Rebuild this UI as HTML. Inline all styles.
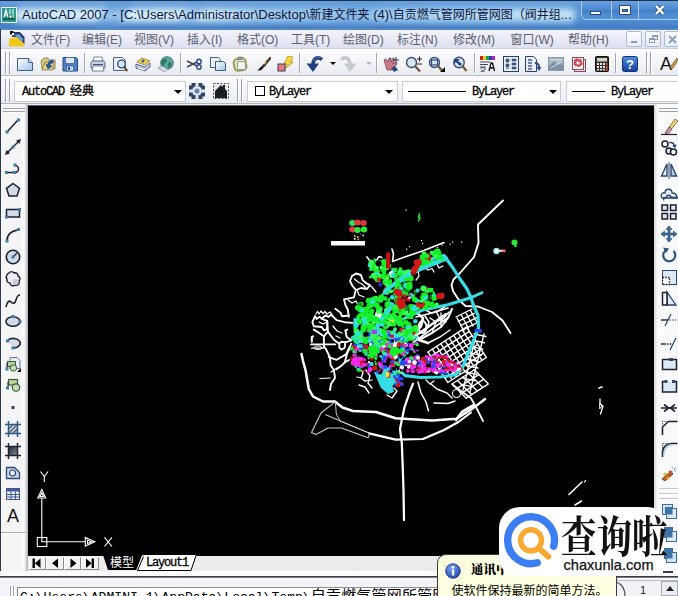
<!DOCTYPE html>
<html><head><meta charset="utf-8">
<style>
*{margin:0;padding:0;box-sizing:border-box}
html,body{width:678px;height:596px;overflow:hidden;background:#eceff6}
body{position:relative;font-family:"Liberation Sans","Noto Sans CJK SC",sans-serif;font-size:12px;color:#000}
.a{position:absolute}
#title{left:0;top:0;width:678px;height:30px;background:linear-gradient(180deg,#1d2c44 0,#1d2c44 1px,#65a0de 1px,#5693d6 8px,#4e8bd1 20px,#4a85cc 25px,#4179c2 28px,#5a8ccc 29px)}
#glow{left:14px;top:8px;width:562px;height:14px;border-radius:7px;background:linear-gradient(90deg,rgba(224,245,250,.95) 0,rgba(226,246,250,.95) 190px,rgba(188,224,244,.8) 250px,rgba(180,218,242,.78) 330px,rgba(196,230,246,.85) 430px,rgba(206,236,248,.92) 560px);filter:blur(3.5px)}
#streak{left:0;top:1px;width:578px;height:28px;background:linear-gradient(118deg,transparent 0,transparent 92px,rgba(86,146,216,.5) 100px,rgba(86,146,216,.5) 112px,transparent 122px,transparent 165px,rgba(86,146,216,.3) 172px,rgba(86,146,216,.3) 180px,transparent 188px,transparent 300px,rgba(86,146,216,.25) 310px,rgba(86,146,216,.25) 330px,transparent 345px)}
#titletxt{left:22px;top:6px;height:18px;line-height:18px;font-size:13px;color:#0b1440;white-space:nowrap}
#titletxt span{font-size:12px}
#menubar{left:1px;top:30px;width:677px;height:19px;background:linear-gradient(#f3f3fb,#e9eaf6 55%,#dde0ef);border-bottom:1px solid #cdd0e0}
.mi{top:32.5px;height:15px;line-height:15px;font-size:12px;color:#5a5e70;white-space:nowrap}
#tb1{left:1px;top:49px;width:677px;height:27px;background:linear-gradient(#fdfdfe,#f4f5f9 50%,#e8ebf2);border-bottom:1px solid #b9bdc8}
#tb2{left:1px;top:76px;width:677px;height:28px;background:linear-gradient(#fdfdfe,#f4f5f9 50%,#e8ebf2);border-top:1px solid #fff;border-bottom:1px solid #b4b7be}
#canvas{left:28px;top:105px;width:626px;height:451px;background:#000;border-top:1px solid #5a5d64}
#left{left:1px;top:104px;width:27px;height:474px;background:linear-gradient(90deg,#f6f6f7 0,#f4f4f6 20px,#fcfcfd 23px,#d8dae0 25px,#a8abb2 27px)}
#right{left:654px;top:104px;width:24px;height:474px;background:linear-gradient(90deg,#d9dbe0 0,#ececf0 2px,#fcfcfd 4px,#f7f8fa 24px)}
#ledge{left:0;top:29px;width:1px;height:567px;background:#2a3a50}
.combo{background:#fff;border:1px solid #c9cdd8;height:21px;top:81px}
.mono{font-family:"Liberation Mono","Noto Sans CJK SC",monospace;font-size:12px;letter-spacing:-1.2px;color:#000;white-space:nowrap;line-height:14px;-webkit-text-stroke:.3px #000}
.mono b{font-weight:normal;letter-spacing:0;font-size:12px}
.grip{width:2px;border-left:1px solid #9da1ab;border-right:1px solid #fff}
.sep{width:2px;border-left:1px solid #a4a8b2;border-right:1px solid #fff}
.dd{width:0;height:0;border-left:4px solid transparent;border-right:4px solid transparent;border-top:4.5px solid #000}
</style></head><body>
<div id="title" class="a"></div>
<div id="glow" class="a"></div>
<div id="streak" class="a"></div>
<div id="titletxt" class="a">AutoCAD 2007 - [C:\Users\Administrator\Desktop\<span>新建文件夹</span> (4)\<span>自贡燃气管网所管网图（阀井组</span>...</div>
<div id="menubar" class="a"></div>

<div class="a mi" style="left:31px">文件(F)</div>
<div class="a mi" style="left:82px">编辑(E)</div>
<div class="a mi" style="left:134px">视图(V)</div>
<div class="a mi" style="left:187px">插入(I)</div>
<div class="a mi" style="left:237px">格式(O)</div>
<div class="a mi" style="left:291px">工具(T)</div>
<div class="a mi" style="left:343px">绘图(D)</div>
<div class="a mi" style="left:397px">标注(N)</div>
<div class="a mi" style="left:453px">修改(M)</div>
<div class="a mi" style="left:510.5px">窗口(W)</div>
<div class="a mi" style="left:568px">帮助(H)</div>
<div id="tb1" class="a"></div>
<div id="tb2" class="a"></div>
<div id="left" class="a"></div>
<div id="right" class="a"></div>
<div id="ledge" class="a"></div>
<div id="canvas" class="a"></div>

<div class="a grip" style="left:5px;top:52px;height:22px"></div>
<div class="a grip" style="left:5px;top:79px;height:23px"></div>
<div class="a grip" style="left:9px;top:52px;height:22px"></div>
<div class="a grip" style="left:9px;top:79px;height:23px"></div>
<div class="a sep" style="left:84px;top:53px;height:20px"></div>
<div class="a sep" style="left:180px;top:53px;height:20px"></div>
<div class="a sep" style="left:299px;top:53px;height:20px"></div>
<div class="a sep" style="left:376px;top:53px;height:20px"></div>
<div class="a sep" style="left:474px;top:53px;height:20px"></div>
<div class="a sep" style="left:615px;top:53px;height:20px"></div>
<div class="a grip" style="left:646px;top:52px;height:22px"></div>
<div class="a grip" style="left:650px;top:52px;height:22px"></div>
<div class="a combo" style="left:14px;width:172px"></div>
<div class="a mono" style="left:22px;top:85px">AutoCAD <b>经典</b></div>
<div class="a dd" style="left:174px;top:90px"></div>
<div class="a grip" style="left:237px;top:79px;height:23px"></div>
<div class="a grip" style="left:241px;top:79px;height:23px"></div>
<div class="a combo" style="left:247px;width:151px"></div>
<div class="a" style="left:255px;top:86px;width:10px;height:10px;border:1px solid #000;background:#fff"></div>
<div class="a mono" style="left:269px;top:85px">ByLayer</div>
<div class="a dd" style="left:385px;top:90px"></div>
<div class="a combo" style="left:402px;width:159px"></div>
<div class="a" style="left:408px;top:91px;width:58px;height:1px;background:#000"></div>
<div class="a mono" style="left:472px;top:85px">ByLayer</div>
<div class="a dd" style="left:549px;top:90px"></div>
<div class="a combo" style="left:566px;width:112px;border-right:none"></div>
<div class="a" style="left:572px;top:91px;width:33px;height:1px;background:#000"></div>
<div class="a mono" style="left:611px;top:85px">ByLayer</div>
<svg class="a" style="left:17px;top:56px" width="16" height="16" viewBox="0 0 16 16"><defs><linearGradient id="gp" x1="0" y1="0" x2="1" y2="1"><stop offset="0" stop-color="#fff"/><stop offset="1" stop-color="#9fc4e4"/></linearGradient></defs><path d="M0.5 2.5h11l4 4v8h-15z" fill="url(#gp)" stroke="#3f5f93"/><path d="M11.5 2.5v4h4" fill="#dbeaf6" stroke="#3f5f93"/></svg>
<svg class="a" style="left:40px;top:56px" width="16" height="16" viewBox="0 0 16 16"><path d="M1 5l3-3h4l1 2h6v9h-13z" fill="#d8c682" stroke="#8a7a40" stroke-width=".8"/><path d="M2 14l3-8h10l-3 8z" fill="#e6d28a" stroke="#8a7a40" stroke-width=".8"/><path d="M13 4c-3 0-5 2-5 5l-2-1 2 5 4-3-2 0c0-2 1-3 3-3z" fill="#2a5aa8" stroke="#1a3a78" stroke-width=".6"/></svg>
<svg class="a" style="left:62px;top:56px" width="16" height="16" viewBox="0 0 16 16"><path d="M1 1.5h13l1.500 1.5v12h-14.5z" fill="#4f7fc4" stroke="#264a86"/><rect x="3.500" y="1.500" width="9" height="6" fill="#dce8f6" stroke="#264a86" stroke-width=".6"/><rect x="4.500" y="10" width="7" height="5" fill="#c8d8ee" stroke="#264a86" stroke-width=".6"/><rect x="6" y="11" width="2" height="3" fill="#264a86"/></svg>
<svg class="a" style="left:90px;top:56px" width="16" height="16" viewBox="0 0 16 16"><path d="M4 1h8l1 5h-10z" fill="#fff" stroke="#56688c" stroke-width=".8"/><path d="M1 7c0-1 1-2 2-2h10c1 0 2 1 2 2v4c0 1-1 2-2 2h-10c-1 0-2-1-2-2z" fill="#c9d3e6" stroke="#3f4f78" stroke-width=".9"/><path d="M3 10h10l1 5h-12z" fill="#fff" stroke="#56688c" stroke-width=".8"/><path d="M3 8.500h10" stroke="#3f4f78"/></svg>
<svg class="a" style="left:112px;top:56px" width="16" height="16" viewBox="0 0 16 16"><path d="M1.500 1.500h9l3 3v10h-12z" fill="#e6eef8" stroke="#51658f"/><circle cx="9.500" cy="8" r="3.800" fill="#cfe4f4" stroke="#3c4c70" stroke-width="1.300"/><path d="M12 11l3.500 4" stroke="#6a4a2a" stroke-width="2"/></svg>
<svg class="a" style="left:135px;top:56px" width="16" height="16" viewBox="0 0 16 16"><path d="M2 6l5-4 8 3-5 4z" fill="#f2d24a" stroke="#8a6a1a" stroke-width=".7"/><path d="M1 8l9 3 5-4v4l-5 4-9-3z" fill="#b9c8e2" stroke="#3f4f78" stroke-width=".8"/><circle cx="8" cy="5" r="1.500" fill="#2a5aa8"/><path d="M3 12l6 2" stroke="#fff"/></svg>
<svg class="a" style="left:158px;top:56px" width="16" height="16" viewBox="0 0 16 16"><circle cx="9" cy="7" r="6.300" fill="#5aa6a0" stroke="#2a5a6a" stroke-width=".8"/><path d="M5 3c2-1 4 0 4 2s-3 2-3 4-3 0-3-2 1-3 2-4z" fill="#2f7a5a"/><path d="M11 6c2 0 3 2 2 4s-3 2-3 0 0-3 1-4z" fill="#2f7a5a"/><path d="M0 12l4-2 6 3-4 3z" fill="#d6dce8" stroke="#7a86a0" stroke-width=".7"/></svg>
<svg class="a" style="left:186px;top:56px" width="16" height="16" viewBox="0 0 16 16"><path d="M1 5l10 5M1 11l10-5" stroke="#3a3f52" stroke-width="1.400"/><circle cx="13" cy="5.500" r="2.200" fill="none" stroke="#2a4a8a" stroke-width="1.400"/><circle cx="13" cy="11" r="2.200" fill="none" stroke="#2a4a8a" stroke-width="1.400"/></svg>
<svg class="a" style="left:210px;top:56px" width="16" height="16" viewBox="0 0 16 16"><path d="M0.500 1.500h8l2 2v8h-10z" fill="#e8f0fa" stroke="#3f5f93"/><path d="M5.500 5.500h8l2 2v7h-10z" fill="url(#gp)" stroke="#3f5f93"/></svg>
<svg class="a" style="left:232px;top:56px" width="16" height="16" viewBox="0 0 16 16"><rect x="2" y="2.500" width="12" height="12" rx="3.500" fill="#e9e6c8" stroke="#a89a56" stroke-width="2" transform="rotate(-10 8 8)"/><path d="M5.500 5.500h6l2 2v6h-8z" fill="#eef4ee" stroke="#7f9a8a" stroke-width=".9"/><rect x="6" y="1" width="4" height="2.500" fill="#9aa0a8" stroke="#666" stroke-width=".6"/></svg>
<svg class="a" style="left:255px;top:56px" width="16" height="16" viewBox="0 0 16 16"><path d="M15 1l-7 8 1.500 1.500 6.500-8z" fill="#5a3a2a" stroke="#2a1a10" stroke-width=".6"/><path d="M8 9l1.500 1.500-3 3.500-4 1 2-3z" fill="#222"/><path d="M9 8l2-2" stroke="#e8c84a" stroke-width="1.500"/></svg>
<svg class="a" style="left:277px;top:56px" width="16" height="16" viewBox="0 0 16 16"><path d="M11 0l6 1-4 5 3 0-8 7 2-5-3 0z" fill="#f6d83a" stroke="#a8861a" stroke-width=".7"/><rect x="1" y="8" width="7" height="7" fill="#e87a7a" stroke="#3a3a5a" stroke-width="1"/></svg>
<svg class="a" style="left:305px;top:56px" width="18" height="16" viewBox="0 0 18 16"><path d="M17 3.500C13 .5 8.500 1.500 8 8.500" fill="none" stroke="#1f3f7f" stroke-width="3.600"/><path d="M1.500 7.500h12.500l-6 8.500z" fill="#1f3f7f"/><path d="M16.500 2.500C13 .5 9.500 1.200 8.200 5" fill="none" stroke="#4a78c0" stroke-width="1"/></svg>
<div class="a dd" style="left:330px;top:62px;border-left-width:3px;border-right-width:3px;border-top-width:3.500px"></div>
<svg class="a" style="left:340px;top:56px" width="18" height="16" viewBox="0 0 18 16"><path d="M1 3.500C5 .5 9.500 1.500 10 8.500" fill="none" stroke="#c6c9cf" stroke-width="3.600"/><path d="M4 7.500h12.500l-6.500 8.500z" fill="#c6c9cf"/></svg>
<div class="a dd" style="left:366px;top:62px;border-left-width:3px;border-right-width:3px;border-top-width:3.500px;border-top-color:#b4b7be"></div>
<svg class="a" style="left:382px;top:56px" width="18" height="16" viewBox="0 0 18 16"><path d="M2 4l2-1 2 3 1-4 2 0 0 4 2-4 2 1-2 5 3-2 1 2-5 6h-5z" fill="#c97a86" stroke="#6a3a4a" stroke-width=".7"/><path d="M9 12l4-2 3 4-4 2z" fill="#2a4a7a"/><path d="M14 1v6M11 4h6" stroke="#2a3a5a" stroke-width="1"/></svg>
<svg class="a" style="left:405px;top:56px" width="18" height="16" viewBox="0 0 18 16"><circle cx="6.500" cy="6.500" r="5" fill="#d4e8f6" stroke="#3c4c70" stroke-width="1.400"/><path d="M10 10l5 5.500" stroke="#7a5230" stroke-width="2.200"/><path d="M12 3h5M14.500 .5v5M12 8h5" stroke="#222" stroke-width="1"/></svg>
<svg class="a" style="left:428px;top:56px" width="18" height="16" viewBox="0 0 18 16"><circle cx="6.500" cy="6.500" r="5" fill="#d4e8f6" stroke="#3c4c70" stroke-width="1.400"/><rect x="3.500" y="4" width="6" height="5" fill="none" stroke="#2a4a8a" stroke-width="1.200"/><path d="M10 10l4 4.500" stroke="#7a5230" stroke-width="2.200"/><path d="M17 11v5h-5z" fill="#000"/></svg>
<svg class="a" style="left:451px;top:56px" width="18" height="16" viewBox="0 0 18 16"><circle cx="8" cy="6.500" r="5.200" fill="#d4e8f6" stroke="#3c4c70" stroke-width="1.400"/><path d="M3 3l6 0-2 2 4 3-2 2-4-4-2 2z" fill="#27408b"/><path d="M11.500 10l4 5" stroke="#7a5230" stroke-width="2.200"/></svg>
<svg class="a" style="left:479px;top:56px" width="16" height="16" viewBox="0 0 16 16"><rect x="1" y="0" width="3" height="4" fill="#d02020"/><rect x="4" y="0" width="3" height="4" fill="#e8d020"/><rect x="7" y="0" width="3" height="4" fill="#20a040"/><rect x="10" y="0" width="3" height="4" fill="#2040c0"/><rect x="13" y="0" width="3" height="4" fill="#c020c0"/><path d="M1 6h10M1 8.500h8M1 11h6" stroke="#445" stroke-width="1.200"/><path d="M10 15l2-8 1.500 0 2 8M11 12h4" stroke="#111" stroke-width="1.300" fill="none"/><path d="M2 13c0-2 4-2 4 0s-4 1-4 3h4" stroke="#345" fill="none"/></svg>
<svg class="a" style="left:503px;top:56px" width="16" height="16" viewBox="0 0 16 16"><rect x=".5" y=".5" width="15" height="15" fill="#e9eff8" stroke="#2d3f66"/><path d="M3 3h3v3h-3zM3 8h3v3h-3zM9 3h4v2h-4zM9 7h4v2h-4zM9 11h4v2h-4zM3 12.500h3" fill="#47608f" stroke="#2d3f66" stroke-width=".6"/></svg>
<svg class="a" style="left:525px;top:56px" width="17" height="16" viewBox="0 0 17 16"><path d="M.5 .5h8l3 3v12h-11z" fill="#e9eff8" stroke="#2d3f66"/><path d="M3 4h4M3 7h4M3 10h4M3 13h4" stroke="#47608f" stroke-width="1.400"/><path d="M10 6c3 0 5 2 5 5l1.500 0-2.500 4-2.500-4 1.500 0c0-2-1-3-3-3z" fill="#2a4a8a"/></svg>
<svg class="a" style="left:548px;top:56px" width="16" height="16" viewBox="0 0 16 16"><rect x=".5" y="1.500" width="15" height="13" fill="#aab8c6" stroke="#8a98a8"/><path d="M1 10l5-5 4 4 3-2 3 3v4h-15z" fill="#7f93a6"/><path d="M2 4l12 0M3 12l10-6" stroke="#d5dde6" stroke-width="1"/></svg>
<svg class="a" style="left:570px;top:56px" width="16" height="16" viewBox="0 0 16 16"><rect x="4.500" y="3.500" width="11" height="12" fill="#f4dede" stroke="#8a4a5a"/><rect x="2.500" y="1.500" width="11" height="12" fill="#fbeeee" stroke="#8a4a5a"/><path d="M5 4c1-2 3-1 3 0 1-1 4-1 3 2 2 1 1 4-1 3 0 2-3 2-3 0-2 1-4-1-2-3-1 0-1-2 0-2z" fill="#e05060" stroke="#a01828" stroke-width=".8"/><circle cx="8" cy="7" r="1.600" fill="#fff"/></svg>
<svg class="a" style="left:594px;top:56px" width="16" height="16" viewBox="0 0 16 16"><rect x="1.500" y=".5" width="13" height="15" rx="1" fill="#3a3230" stroke="#15110f"/><rect x="3" y="2" width="10" height="3.500" fill="#c9d6c2"/><g fill="#e8e2dc"><rect x="3" y="7" width="2" height="2"/><rect x="6" y="7" width="2" height="2"/><rect x="9" y="7" width="2" height="2"/><rect x="3" y="10" width="2" height="2"/><rect x="6" y="10" width="2" height="2"/><rect x="9" y="10" width="2" height="2"/><rect x="3" y="13" width="2" height="1.500"/><rect x="6" y="13" width="2" height="1.500"/><rect x="9" y="13" width="2" height="1.500"/></g><g fill="#d05040"><rect x="12" y="7" width="1.500" height="2"/><rect x="12" y="10" width="1.500" height="4.500"/></g></svg>
<svg class="a" style="left:622px;top:56px" width="16" height="16" viewBox="0 0 16 16"><defs><linearGradient id="gh" x1="0" y1="0" x2="0" y2="1"><stop offset="0" stop-color="#4f8fe0"/><stop offset="1" stop-color="#163f9a"/></linearGradient></defs><rect x=".5" y=".5" width="15" height="15" rx="2" fill="url(#gh)" stroke="#0f2f78"/><text x="8" y="13" font-family="Liberation Sans,sans-serif" font-weight="bold" font-size="13" fill="#fff" text-anchor="middle">?</text></svg>
<svg class="a" style="left:660px;top:55px" width="18" height="18" viewBox="0 0 18 18"><text x="0" y="15" font-family="Liberation Sans,sans-serif" font-size="18" fill="#111">A</text><path d="M17 3l-6 8-1 3 3-1 5-8z" fill="#c89a3a" stroke="#5a3a1a" stroke-width=".6"/></svg>
<svg class="a" style="left:189px;top:83px" width="16" height="16" viewBox="0 0 16 16"><rect x="0" y="0" width="16" height="16" fill="#2f4468"/><g fill="#dfe6f2"><circle cx="8" cy="8" r="5"/></g><circle cx="8" cy="8" r="2.500" fill="#6d82a8"/><g fill="#dfe6f2"><rect x="6.500" y="0" width="3" height="3"/><rect x="6.500" y="13" width="3" height="3"/><rect x="0" y="6.500" width="3" height="3"/><rect x="13" y="6.500" width="3" height="3"/></g><g fill="#eef2f8"><rect x="0" y="0" width="2.500" height="2.500"/><rect x="13.500" y="0" width="2.500" height="2.500"/><rect x="0" y="13.500" width="2.500" height="2.500"/><rect x="13.500" y="13.500" width="2.500" height="2.500"/></g></svg>
<svg class="a" style="left:213px;top:83px" width="16" height="16" viewBox="0 0 16 16"><rect x=".5" y=".5" width="15" height="15" fill="#e6e9ef" stroke="#555" stroke-dasharray="2 1.500"/><path d="M2 8l6-6 6 6v7h-12z" fill="#1a1d24"/><rect x="10" y="2" width="2" height="4" fill="#1a1d24"/></svg>
<div class="a" style="left:626px;top:31px;width:16px;height:16px;border:1px solid #a9bcd8;border-radius:2px;background:linear-gradient(#fdfdff,#e9edf6)"></div>
<div class="a" style="left:631px;top:41px;width:6px;height:2px;background:#8a9cbc"></div>
<div class="a" style="left:645px;top:31px;width:16px;height:16px;border:1px solid #a9bcd8;border-radius:2px;background:linear-gradient(#fdfdff,#e9edf6)"></div>
<div class="a" style="left:652px;top:35px;width:6px;height:5px;border:1px solid #8a9cbc;border-top-width:2px"></div>
<div class="a" style="left:649px;top:38px;width:6px;height:5px;border:1px solid #8a9cbc;border-top-width:2px;background:#f4f6fb"></div>
<div class="a" style="left:663.500px;top:31px;width:17px;height:16px;border:1px solid #a9bcd8;border-radius:2px;background:linear-gradient(#fdfdff,#e9edf6)"></div>
<svg class="a" style="left:668px;top:35px" width="10" height="9"><path d="M1 1l7 7M8 1l-7 7" stroke="#8a9cbc" stroke-width="1.800"/></svg>
<svg class="a" style="left:9px;top:31px" width="16" height="16" viewBox="0 0 16 16"><path d="M0 7.500l8-1.500 7.500 7v2.500h-15.500z" fill="#f2c81a"/><path d="M3 1h8l4.500 5v7l-7.500-7h-5z" fill="#1f3a6e"/><path d="M5.500 4l4.500-1 4.500 5.500-1.200 2z" fill="#6fa0d0"/><path d="M1 0h3.500v3.500h-3.500z" fill="#111"/><path d="M3 2h2.200v2.200h-2.200z" fill="#fff"/></svg>
<svg class="a" style="left:1px;top:7px" width="16" height="16" viewBox="0 0 16 16"><rect x="0" y="0" width="16" height="16" fill="#e6f6f2"/><rect x="1" y="1" width="14" height="14" fill="#2b9a8a"/><path d="M3 10l2-7 2 7M3.500 8h3" stroke="#fff" stroke-width="1.200" fill="none"/><path d="M9 2v9M12 2v9" stroke="#bfe8e0" stroke-width="1.400"/><path d="M2 12h12" stroke="#0c4a44" stroke-width="1.400"/><rect x="8" y="8" width="3" height="3" fill="#fff" stroke="#0c4a44" stroke-width=".7"/></svg>
<div class="a" style="left:581px;top:1px;width:97px;height:19px;border-radius:0 0 0 5px;background:linear-gradient(#6aa2e0,#4f8bd2 45%,#4380ca 50%,#5793d8);border:1px solid #a9cdf0;border-top:none;border-right:none"></div>
<div class="a" style="left:611px;top:1px;width:1px;height:19px;background:#a9cdf0"></div>
<div class="a" style="left:638px;top:1px;width:1px;height:19px;background:#a9cdf0"></div>
<div class="a" style="left:590px;top:11px;width:11px;height:4px;background:#fff;border:1px solid #2a4a7a"></div>
<div class="a" style="left:619px;top:5px;width:12px;height:10px;background:#fff;border:1px solid #2a4a7a"></div>
<div class="a" style="left:622px;top:9px;width:6px;height:3px;background:#4a82cc;border:1px solid #2a4a7a"></div>
<svg class="a" style="left:653px;top:4px" width="14" height="12"><path d="M3 2l7.500 8M10.500 2l-7.500 8" stroke="#2a4a7a" stroke-width="4"/><path d="M3 2l7.500 8M10.500 2l-7.500 8" stroke="#fff" stroke-width="2.500"/></svg>
<div class="a" style="left:3px;top:108px;width:22px;height:1px;background:#9da1ab"></div><div class="a" style="left:3px;top:109px;width:22px;height:1px;background:#fff"></div><div class="a" style="left:3px;top:111px;width:22px;height:1px;background:#9da1ab"></div><div class="a" style="left:3px;top:112px;width:22px;height:1px;background:#fff"></div>
<svg class="a" style="left:4px;top:117px" width="18" height="18" viewBox="0 0 18 18"><path d="M3 15L14 3" stroke="#1d2230" stroke-width="1.500"/><rect x="1.500" y="13.500" width="3" height="3" fill="#3b7ea6"/><rect x="13" y="1.500" width="3" height="3" fill="#3b7ea6"/></svg>
<svg class="a" style="left:4px;top:138px" width="18" height="18" viewBox="0 0 18 18"><path d="M2.500 15.500L15.500 2.500" stroke="#1d2230" stroke-width="1.500"/><path d="M1 17l1.500-5 3.500 3.500zM17 1l-1.500 5-3.500-3.500z" fill="#1d2230"/><rect x="7.500" y="7.500" width="3" height="3" fill="#3b7ea6"/></svg>
<svg class="a" style="left:4px;top:160px" width="18" height="18" viewBox="0 0 18 18"><path d="M3 12.500h8a3.500 3.500 0 0 0 0-7" stroke="#1d2230" stroke-width="1.500" fill="none"/><rect x="1" y="11" width="3" height="3" fill="#3b7ea6"/><rect x="9" y="11" width="3" height="3" fill="#3b7ea6"/><rect x="9.500" y="3.500" width="3" height="3" fill="#3b7ea6"/></svg>
<svg class="a" style="left:4px;top:181px" width="18" height="18" viewBox="0 0 18 18"><path d="M9 2.500l6.500 4.800-2.500 7.700h-8l-2.500-7.700z" fill="#d5daea" stroke="#1d2230" stroke-width="1.500"/></svg>
<svg class="a" style="left:4px;top:203.6px" width="18" height="18" viewBox="0 0 18 18"><rect x="2.500" y="5.500" width="13" height="7.500" fill="#d5daea" stroke="#1d2230" stroke-width="1.500"/><rect x="14" y="4" width="3" height="3" fill="#3b7ea6"/><rect x="1" y="11.500" width="3" height="3" fill="#3b7ea6"/></svg>
<svg class="a" style="left:4px;top:225.5px" width="18" height="18" viewBox="0 0 18 18"><path d="M3 15c0-6 4-10 11-11" stroke="#1d2230" stroke-width="1.700" fill="none"/><rect x="1.500" y="13.500" width="3" height="3" fill="#3b7ea6"/><rect x="13" y="2" width="3" height="3" fill="#3b7ea6"/></svg>
<svg class="a" style="left:4px;top:247.7px" width="18" height="18" viewBox="0 0 18 18"><circle cx="9" cy="9" r="6.700" fill="#d5daea" stroke="#1d2230" stroke-width="1.600"/><path d="M9 9l4-4" stroke="#1d2230" stroke-width="1.300"/><rect x="7.500" y="7.500" width="3" height="3" fill="#3b7ea6"/></svg>
<svg class="a" style="left:4px;top:269.6px" width="18" height="18" viewBox="0 0 18 18"><path d="M5 3a3 3 0 0 1 5 0 3 3 0 0 1 4 3 3 3 0 0 1 1 5 3 3 0 0 1-4 4 3 3 0 0 1-5-2 3 3 0 0 1-3-4 3 3 0 0 1 0-4 3 3 0 0 1 2-2z" fill="#eceef4" stroke="#1d2230" stroke-width="1.400"/><circle cx="11.500" cy="12" r="3" fill="#c5cad8"/></svg>
<svg class="a" style="left:4px;top:291.8px" width="18" height="18" viewBox="0 0 18 18"><path d="M2 15c1-5 3-7 5-5s4 2 5-2 2-5 4-5" stroke="#1d2230" stroke-width="1.600" fill="none"/></svg>
<svg class="a" style="left:4px;top:312.4px" width="18" height="18" viewBox="0 0 18 18"><ellipse cx="9" cy="9.500" rx="7" ry="4.800" fill="#d5daea" stroke="#1d2230" stroke-width="1.600"/><rect x="7.500" y="3" width="3" height="3" fill="#3b7ea6"/><rect x="14.500" y="8" width="3" height="3" fill="#3b7ea6"/></svg>
<svg class="a" style="left:4px;top:333.9px" width="18" height="18" viewBox="0 0 18 18"><path d="M4 6a7 4.800 0 1 1 5 8" fill="#d5daea" stroke="#1d2230" stroke-width="1.600"/><rect x="2" y="5.500" width="3" height="3" fill="#3b7ea6"/><rect x="7.500" y="12.500" width="3" height="3" fill="#3b7ea6"/></svg>
<svg class="a" style="left:4px;top:354.6px" width="18" height="18" viewBox="0 0 18 18"><path d="M6 2.500h7l3 3v8h-10z" fill="#e8eef8" stroke="#6a7a9a" stroke-width="1"/><rect x="3.500" y="6.500" width="8" height="5" fill="#b9d29a" stroke="#3a5a3a" stroke-width="1"/><circle cx="9.500" cy="13" r="3.200" fill="#c9deb0" stroke="#3a5a3a" stroke-width="1"/><path d="M3 8v6" stroke="#1d2230"/><rect x="1.500" y="12.500" width="3" height="3" fill="#3b7ea6"/><path d="M17 13v4h-4z" fill="#111"/></svg>
<svg class="a" style="left:4px;top:376px" width="18" height="18" viewBox="0 0 18 18"><rect x="4.500" y="3.500" width="9" height="5.500" fill="#b9d29a" stroke="#3a5a3a" stroke-width="1.200"/><circle cx="12" cy="11.500" r="3.700" fill="#c9deb0" stroke="#3a5a3a" stroke-width="1.200"/><path d="M4 6v6" stroke="#1d2230"/><rect x="2" y="10.500" width="3" height="3" fill="#3b7ea6"/></svg>
<svg class="a" style="left:4px;top:398.8px" width="18" height="18" viewBox="0 0 18 18"><rect x="7.500" y="7" width="3" height="3" fill="#23466e"/></svg>
<svg class="a" style="left:4px;top:420px" width="18" height="18" viewBox="0 0 18 18"><defs><pattern id="ht" width="3" height="3" patternUnits="userSpaceOnUse" patternTransform="rotate(45)"><rect width="3" height="3" fill="#dfe3ee"/><rect width="1.300" height="3" fill="#3a4256"/></pattern></defs><rect x="4" y="4" width="10" height="10" fill="url(#ht)"/><path d="M1 4.500h16M1 13.500h16M4.500 1v16M13.500 1v16" stroke="#2a5a86" stroke-width="1.500"/></svg>
<svg class="a" style="left:4px;top:441.7px" width="18" height="18" viewBox="0 0 18 18"><defs><linearGradient id="gg" x1="0" y1="0" x2="1" y2="1"><stop offset="0" stop-color="#20242c"/><stop offset="1" stop-color="#8a909c"/></linearGradient></defs><rect x="4" y="4" width="10" height="10" fill="url(#gg)"/><path d="M1 4.500h16M1 13.500h16M4.500 1v16M13.500 1v16" stroke="#1d2230" stroke-width="1.500"/></svg>
<svg class="a" style="left:4px;top:464px" width="18" height="18" viewBox="0 0 18 18"><path d="M2.500 3.500h8l5 5v6h-13z" fill="#c9d6ea" stroke="#2d4a7a" stroke-width="1.300"/><circle cx="8.500" cy="9" r="3" fill="#f4f6fa" stroke="#2d4a7a" stroke-width="1.200"/></svg>
<svg class="a" style="left:4px;top:484.7px" width="18" height="18" viewBox="0 0 18 18"><rect x="2.500" y="3.500" width="13" height="11" fill="#eef2f8" stroke="#3d5a96" stroke-width="1"/><rect x="2.500" y="3.500" width="13" height="3" fill="#3d5a96"/><path d="M2.500 9.500h13M2.500 12h13M7 6.500v8M11.500 6.500v8" stroke="#3d5a96" stroke-width="1"/></svg>
<div class="a" style="left:7px;top:505.500px;font-size:18px;line-height:20px;color:#111">A</div>
<div class="a" style="left:1px;top:532px;width:26px;height:1px;background:#a9adb6"></div><div class="a" style="left:1px;top:533px;width:26px;height:1px;background:#fff"></div>
<div class="a" style="left:659px;top:108px;width:19px;height:1px;background:#9da1ab"></div><div class="a" style="left:659px;top:109px;width:19px;height:1px;background:#fff"></div><div class="a" style="left:659px;top:111px;width:19px;height:1px;background:#9da1ab"></div><div class="a" style="left:659px;top:112px;width:19px;height:1px;background:#fff"></div>
<svg class="a" style="left:660px;top:118px" width="18" height="18" viewBox="0 0 18 18"><path d="M15 1l3 2-9 11-4 1z" fill="#e8d27a" stroke="#6a5a2a" stroke-width=".7"/><path d="M9 9l3 2-3 4-4 1z" fill="#d89aa0" stroke="#6a3a4a" stroke-width=".7"/><path d="M1 16.500h16" stroke="#1d2230" stroke-width="1.200"/></svg>
<svg class="a" style="left:660px;top:139px" width="18" height="18" viewBox="0 0 18 18"><circle cx="5" cy="5" r="3" fill="#f4f6fa" stroke="#1d2230" stroke-width="1.500"/><circle cx="9" cy="12" r="3" fill="#d9dde8" stroke="#1d2230" stroke-width="1.500"/><circle cx="13.500" cy="13" r="3" fill="#f4f6fa" stroke="#1d2230" stroke-width="1.500"/><path d="M9 3c3-1 5 0 6 3l1.500-1-1 4-3.500-2 1.500-.5c-1-2-2-2.500-4-2z" fill="#2a4670"/></svg>
<svg class="a" style="left:660px;top:161px" width="18" height="18" viewBox="0 0 18 18"><path d="M7 3v12h-5.500z" fill="#e8eef8" stroke="#2a4670" stroke-width="1.400"/><path d="M11 3v12h5.500z" fill="#b9cde4" stroke="#2a4670" stroke-width="1.400"/><path d="M9 1v17" stroke="#2a4670" stroke-width="1"/></svg>
<svg class="a" style="left:660px;top:183.5px" width="18" height="18" viewBox="0 0 18 18"><path d="M2 14c-2-3 0-6 3-5 0-5 7-5 7 0 4 0 5 3 5 5z" fill="#e8eef8" stroke="#2a4670" stroke-width="1.300"/><path d="M4 16.500c-1-2 0-3.500 2.500-3 0-3 4.500-3 4.500 0h7" fill="none" stroke="#2a4670" stroke-width="1.300"/></svg>
<svg class="a" style="left:660px;top:203px" width="18" height="18" viewBox="0 0 18 18"><g fill="#e4e8f0" stroke="#1d2230" stroke-width="1.500"><rect x="2" y="2" width="5.500" height="5.500"/><rect x="10.500" y="2" width="5.500" height="5.500"/><rect x="2" y="10.500" width="5.500" height="5.500"/><rect x="10.500" y="10.500" width="5.500" height="5.500"/></g></svg>
<svg class="a" style="left:660px;top:225px" width="18" height="18" viewBox="0 0 18 18"><path d="M9 1l3 3.500h-2v3.500h3.500v-2l3.500 3-3.500 3v-2h-3.500v3.500h2l-3 3.500-3-3.500h2v-3.500h-3.500v2l-3.500-3 3.500-3v2h3.500v-3.500h-2z" fill="#3d6a96" stroke="#24486e" stroke-width=".6"/></svg>
<svg class="a" style="left:660px;top:246px" width="18" height="18" viewBox="0 0 18 18"><path d="M13.500 5a6 6 0 1 1-6-1.500" fill="none" stroke="#2d567e" stroke-width="2.200"/><path d="M3 1.500l6 1-3 4.500z" fill="#2d567e"/></svg>
<svg class="a" style="left:660px;top:268.5px" width="18" height="18" viewBox="0 0 18 18"><rect x="2.500" y="1.500" width="14" height="14" fill="#dce8f4" stroke="#2a4670" stroke-width="1"/><rect x="2.500" y="8.500" width="7" height="7" fill="#fff" stroke="#1d2230" stroke-width="1.300" stroke-dasharray="1.500 1.200"/></svg>
<svg class="a" style="left:660px;top:289.6px" width="18" height="18" viewBox="0 0 18 18"><path d="M7 2l9 13h-9z" fill="#dce8f4" stroke="#2a4670" stroke-width="1.300"/><rect x="2.500" y="2.500" width="4.500" height="12.500" fill="#fff" stroke="#1d2230" stroke-width="1.500"/></svg>
<svg class="a" style="left:660px;top:311px" width="18" height="18" viewBox="0 0 18 18"><path d="M1 9h7" stroke="#1d2230" stroke-width="1.400"/><path d="M9 9h9" stroke="#2a4670" stroke-width="1.200" stroke-dasharray="1.500 1.300"/><path d="M5 15l6-12" stroke="#2a4670" stroke-width="1.300"/></svg>
<svg class="a" style="left:660px;top:334px" width="18" height="18" viewBox="0 0 18 18"><path d="M1 10h5" stroke="#1d2230" stroke-width="1.400"/><path d="M7 10h5" stroke="#1d2230" stroke-width="1.300" stroke-dasharray="1.500 1.300"/><path d="M10 16l6-12" stroke="#2a4670" stroke-width="1.300"/></svg>
<svg class="a" style="left:660px;top:355px" width="18" height="18" viewBox="0 0 18 18"><rect x="2.500" y="4.500" width="14" height="10" fill="#dce8f4" stroke="#1d2230" stroke-width="1.500"/><rect x="9" y="3" width="4" height="3" fill="#3a4a66"/></svg>
<svg class="a" style="left:660px;top:376.5px" width="18" height="18" viewBox="0 0 18 18"><path d="M6 4.500h-3.500v10.500h14v-10.500h-3.500" fill="#dce8f4" stroke="#1d2230" stroke-width="1.500"/><rect x="4.500" y="3" width="3" height="3" fill="#3a4a66"/><rect x="12" y="3" width="3" height="3" fill="#3a4a66"/></svg>
<svg class="a" style="left:660px;top:398.6px" width="18" height="18" viewBox="0 0 18 18"><path d="M1 9h16" stroke="#1d2230" stroke-width="1.500"/><path d="M4 5.500l4.500 3.500-4.500 3.500M15 5.500l-4.500 3.500 4.500 3.500" fill="none" stroke="#1d2230" stroke-width="1.600"/></svg>
<svg class="a" style="left:660px;top:419px" width="18" height="18" viewBox="0 0 18 18"><path d="M2.500 16v-8l6-5.500h9" fill="none" stroke="#1d2230" stroke-width="1.600"/><path d="M2.500 8v-5.500h6" fill="none" stroke="#2a4670" stroke-width="1.200" stroke-dasharray="1.300 1.200"/></svg>
<svg class="a" style="left:660px;top:441px" width="18" height="18" viewBox="0 0 18 18"><path d="M2.500 16v-4c0-6 4-9.500 9-9.500h6" fill="none" stroke="#1d2230" stroke-width="1.600"/><path d="M2.500 10v-7.500h8" fill="none" stroke="#2a4670" stroke-width="1.200" stroke-dasharray="1.300 1.200"/><path d="M3.500 15c0-6 3-11 9-11.500" fill="none" stroke="#9ec4e2" stroke-width="1.500"/></svg>
<svg class="a" style="left:660px;top:464.5px" width="18" height="18" viewBox="0 0 18 18"><path d="M2 14l9-8 2 3-8 7z" fill="#b4622a" stroke="#6a2a10" stroke-width=".7"/><circle cx="5" cy="9" r="1.600" fill="#e8a83a"/><circle cx="8" cy="13" r="1.600" fill="#e8a83a"/><circle cx="10" cy="7" r="1.400" fill="#d84a2a"/><path d="M12 2l1 2M15 3l-1 2M16 6l-2 .5M13 6.500l3-4" stroke="#5a8ab8" stroke-width="1" stroke-dasharray="1 1"/></svg>
<div class="a" style="left:659px;top:488px;width:19px;height:2px;background:#c3c7d0;border-bottom:1px solid #fff"></div>
<div class="a" style="left:659px;top:493px;width:19px;height:2px;background:#c3c7d0;border-bottom:1px solid #fff"></div>
<div class="a" style="left:659px;top:498px;width:19px;height:2px;background:#c3c7d0;border-bottom:1px solid #fff"></div>
<svg class="a" style="left:660px;top:503px" width="18" height="18" viewBox="0 0 18 18"><rect x="2.500" y="1.500" width="10" height="10" fill="#cfe2f2" stroke="#3f6c9a" stroke-width="1"/><rect x="6.500" y="5.500" width="10" height="10" fill="#dbeaf6" stroke="#3f6c9a" stroke-width="1"/><rect x="5" y="4" width="7.500" height="7.500" fill="#3f74a6"/></svg>
<svg class="a" style="left:660px;top:526px" width="18" height="18" viewBox="0 0 18 18"><rect x="2.500" y="1.500" width="10" height="10" fill="#3f74a6" stroke="#3f6c9a" stroke-width="1"/><rect x="6.500" y="5.500" width="10" height="10" fill="#dbeaf6" stroke="#3f6c9a" stroke-width="1"/><rect x="5" y="4" width="7.500" height="7.500" fill="#3f74a6"/></svg>
<svg class="a" style="left:660px;top:547px" width="18" height="18" viewBox="0 0 18 18"><rect x="2.500" y="1.500" width="10" height="10" fill="#3f74a6" stroke="#3f6c9a" stroke-width="1"/><rect x="6.500" y="5.500" width="10" height="10" fill="#cfe2f2" stroke="#3f6c9a" stroke-width="1"/><rect x="5" y="4" width="7.500" height="7.500" fill="#3f74a6"/></svg>
<div class="a" style="left:663px;top:571px;width:10px;height:2px;background:#333a48"></div>
<svg class="a" style="left:28px;top:105px" width="627" height="451" viewBox="28 105 627 451" fill="none" stroke-linecap="round" stroke-linejoin="round"><rect x="331" y="241" width="34" height="4.500" fill="#fff"/><ellipse cx="352.5" cy="223" rx="3.300" ry="3" fill="#2fe05a"/><ellipse cx="357.5" cy="222.5" rx="3.300" ry="3" fill="#e03a3a"/><ellipse cx="363.5" cy="223" rx="3.300" ry="3" fill="#d83a3a"/><ellipse cx="352.5" cy="229.5" rx="3.300" ry="3" fill="#e03a3a"/><ellipse cx="357.5" cy="230" rx="3.300" ry="3" fill="#2fe63a"/><ellipse cx="364" cy="229.5" rx="3.300" ry="3" fill="#2fe63a"/><rect x="354" y="235" width="1.500" height="1.800" fill="#e8e040"/><rect x="357" y="236" width="1.500" height="1.800" fill="#e8e040"/><rect x="360" y="233.5" width="1.500" height="1.800" fill="#3a4ae0"/><rect x="362.5" y="234.5" width="1.500" height="1.800" fill="#e8e040"/><rect x="354" y="238" width="1.500" height="1.800" fill="#fff"/><rect x="357.5" y="238.5" width="1.500" height="1.800" fill="#e8a030"/><path d="M419.500 214l-1 3 1.500 1-1.500 3" stroke="#2fe63a" stroke-width="1.600"/><circle cx="514.500" cy="242.500" r="3" fill="#2fe63a"/><circle cx="515.500" cy="246" r="1.300" fill="#2fe63a"/><circle cx="496.500" cy="251" r="2.600" stroke="#7fe8e8" stroke-width="1.200" fill="#fff"/><rect x="500.500" y="249.500" width="5" height="2.600" fill="#ff6a6a"/><rect x="499" y="250" width="3" height="1.500" fill="#fff"/><rect x="405.5" y="209.5" width="1.200" height="1.200" fill="#fff"/><rect x="421" y="240" width="1.200" height="1.200" fill="#fff"/><rect x="422" y="243" width="1.200" height="1.200" fill="#fff"/><rect x="429" y="248" width="1.200" height="1.200" fill="#fff"/><rect x="452" y="241.5" width="1.200" height="1.200" fill="#fff"/><rect x="461" y="241.5" width="1.200" height="1.200" fill="#fff"/><rect x="449.5" y="243.5" width="1.200" height="1.200" fill="#fff"/><rect x="406" y="248.5" width="1.200" height="1.200" fill="#fff"/><rect x="409" y="246" width="1.200" height="1.200" fill="#fff"/><rect x="437" y="247" width="1.200" height="1.200" fill="#fff"/><rect x="441.5" y="244.5" width="1.200" height="1.200" fill="#fff"/><path d="M599 388l3-1" stroke="#fff" stroke-width="1.600"/><path d="M600 399v5l3 2-2.500 8" stroke="#fff" stroke-width="1.300"/><path d="M600 404l2.500 1.500-2.500 3z" stroke="#fff" stroke-width="1"/><path d="M569.0 494.5 582.0 482.0" stroke="#fff" stroke-width="1.62"/><path d="M575.0 505.0 581.5 501.0" stroke="#fff" stroke-width="1.50"/><path d="M584.5 482.0 585.5 480.5" stroke="#fff" stroke-width="1.25"/><path d="M503.0 200.5 478.0 224.5 478.5 243.0 474.0 257.0 460.0 273.0 453.5 279.5 451.5 285.0 453.0 291.0 458.5 299.5 465.5 306.0 478.0 306.5 492.0 312.0 502.5 320.5 510.5 333.0" stroke="#fff" stroke-width="1.88"/><path d="M470.8 297.7 482.5 292.5" stroke="#fff" stroke-width="1.88"/><path d="M392.0 249.0 393.5 254.0 392.5 261.5 405.4 256.8 423.8 250.5 444.0 242.5" stroke="#fff" stroke-width="1.62"/><path d="M366.8 256.8 370.0 261.0 376.8 260.0 379.0 256.5 381.9 257.5" stroke="#fff" stroke-width="1.50"/><path d="M423.0 266.0 428.0 270.0 432.0 268.5 434.0 272.0" stroke="#fff" stroke-width="1.25"/><path d="M418.0 270.0 419.0 276.0 416.0 280.0" stroke="#fff" stroke-width="1.25"/><path d="M436.0 262.0 439.0 268.0 443.0 266.0" stroke="#fff" stroke-width="1.25"/><path d="M355.4 291.3 354.0 297.4 344.0 299.4 345.3 304.8 348.0 310.0 348.7 316.8" stroke="#fff" stroke-width="1.88"/><path d="M335.3 308.8 340.6 312.8 342.0 316.2 348.7 315.5" stroke="#fff" stroke-width="1.88"/><path d="M315.0 316.2 316.5 318.9 319.8 316.8 321.8 318.9 325.2 315.5 328.6 316.8 331.2 314.8 334.0 317.5 336.6 320.2 344.7 322.2 352.7 322.9" stroke="#fff" stroke-width="1.88"/><path d="M315.0 316.2 312.4 322.2 313.8 326.2 321.8 327.0 323.9 330.3 327.2 329.0 327.2 320.9 321.8 318.9" stroke="#fff" stroke-width="1.88"/><path d="M327.2 320.9 327.9 331.6 323.9 336.3 323.9 346.4 325.9 349.0 329.9 357.1 330.6 365.2 333.9 370.0 335.0 378.0 331.0 384.0 330.0 390.0" stroke="#fff" stroke-width="1.88"/><path d="M313.8 329.6 319.2 333.0 323.9 336.3" stroke="#fff" stroke-width="1.88"/><path d="M327.9 331.6 333.9 339.7 339.3 343.7 339.3 347.7 341.3 349.7 344.7 347.7 345.3 342.3 341.3 341.7 339.3 343.7" stroke="#fff" stroke-width="1.88"/><path d="M345.3 342.3 351.4 340.3 346.7 337.0 345.3 330.3 347.3 329.6" stroke="#fff" stroke-width="1.88"/><path d="M311.8 341.7 311.8 337.0 313.1 336.3" stroke="#fff" stroke-width="2.00"/><path d="M311.1 344.4 335.3 344.4" stroke="#fff" stroke-width="1.88"/><ellipse cx="318" cy="347.700" rx="4" ry="1.800" stroke="#fff" stroke-width="1"/><path d="M311.5 348.0 324.0 348.0" stroke="#fff" stroke-width="1.25"/><path d="M328.6 357.1 336.6 359.8 346.0 354.4 348.7 349.0 351.4 343.7" stroke="#fff" stroke-width="1.88"/><path d="M344.7 362.5 347.3 353.1 350.0 347.7" stroke="#fff" stroke-width="1.88"/><path d="M336.6 369.2 342.0 365.2 344.7 362.5 349.0 360.0" stroke="#fff" stroke-width="1.88"/><path d="M330.0 378.0 320.0 378.5" stroke="#fff" stroke-width="1.25"/><path d="M331.0 372.0 337.0 368.0" stroke="#fff" stroke-width="1.25"/><path d="M316.0 314.0 317.5 311.5 319.0 314.0 321.0 311.0 323.0 313.5 325.0 311.5 327.0 314.0 330.0 312.0 332.0 314.5" stroke="#fff" stroke-width="1.25"/><path d="M319.0 322.0 323.0 324.0 326.0 322.5" stroke="#fff" stroke-width="1.25"/><path d="M333.0 326.0 337.0 331.0 342.0 333.0" stroke="#fff" stroke-width="1.25"/><path d="M336.0 336.0 340.0 338.0" stroke="#fff" stroke-width="1.25"/><path d="M348.0 300.0 352.0 303.0 356.0 301.0 358.0 305.0" stroke="#fff" stroke-width="1.25"/><path d="M352.0 276.0 356.0 273.5 361.0 275.0 362.5 280.0 366.0 283.0 370.0 285.0 367.0 289.0 361.0 288.0 356.0 290.0 352.5 286.0 350.0 281.0 352.0 276.0" stroke="#fff" stroke-width="1.88"/><path d="M354.5 279.0 358.0 282.0 362.0 284.0 366.0 288.0" stroke="#fff" stroke-width="1.25"/><path d="M357.0 290.0 359.0 295.0 364.0 297.0" stroke="#fff" stroke-width="1.25"/><path d="M366.0 283.0 372.0 287.0 376.0 292.0" stroke="#fff" stroke-width="1.25"/><path d="M301.5 354.0 303.0 361.0 305.5 370.0 308.8 389.0 313.0 396.5 323.0 401.5 335.0 401.5 338.0 404.0 342.5 407.5 353.0 411.0 376.0 412.0 395.6 418.3 432.0 420.4 456.6 418.7 470.8 409.8 478.0 404.5 485.0 399.0" stroke="#fff" stroke-width="2.50"/><path d="M369.0 433.4 395.6 439.6 423.0 439.0 444.0 430.0 458.4 422.0 471.0 412.5" stroke="#fff" stroke-width="2.12"/><path d="M413.0 383.7 409.7 392.0 404.4 407.7 401.8 420.0 400.0 429.0 401.8 443.0 402.7 466.0 403.5 490.0 404.0 520.0" stroke="#fff" stroke-width="2.25"/><path d="M453.0 385.0 461.0 391.0 470.8 398.0 476.0 407.0 483.0 421.0" stroke="#fff" stroke-width="1.75"/><path d="M456.0 420.0 462.0 412.0 473.0 405.5" stroke="#fff" stroke-width="2.75"/><path d="M334.5 402.4 321.0 413.0 311.5 432.5 316.0 434.5 328.0 428.0 341.6 428.0 368.0 437.8 370.0 433.4 325.7 414.8" stroke="#c8c8c8" stroke-width="1.10"/><path d="M335.4 402.4 336.3 414.0 340.0 421.0 368.0 432.5" stroke="#c8c8c8" stroke-width="1.00"/><path d="M418.0 382.0 421.0 393.0 426.0 402.0 428.5 411.0" stroke="#fff" stroke-width="1.50"/><path d="M431.0 384.0 437.0 389.0 447.0 393.0 452.0 398.0" stroke="#fff" stroke-width="1.38"/><path d="M434.0 403.0 448.0 403.5 455.0 401.0" stroke="#fff" stroke-width="1.38"/><circle cx="456.500" cy="393.500" r="4" stroke="#fff" stroke-width="1.100"/><path d="M426.0 380.0 430.0 384.0 434.0 381.0" stroke="#fff" stroke-width="1.25"/><path d="M360.0 368.0 363.0 373.0 361.0 378.0 365.0 381.0" stroke="#fff" stroke-width="1.38"/><path d="M366.0 370.0 370.0 376.0 368.0 383.0 372.0 388.0" stroke="#fff" stroke-width="1.38"/><path d="M359.0 385.0 365.0 387.0 369.0 393.0" stroke="#fff" stroke-width="1.38"/><path d="M357.0 377.0 362.0 378.0" stroke="#fff" stroke-width="1.25"/><path d="M365.0 381.0 372.0 380.0" stroke="#fff" stroke-width="1.25"/><path d="M387.0 395.0 392.0 398.0 397.0 391.0 394.0 388.0" stroke="#fff" stroke-width="1.38"/><path d="M428.0 352.0 466.6 326.9" stroke="#fff" stroke-width="1.38"/><path d="M430.8 356.4 469.4 331.3" stroke="#fff" stroke-width="1.38"/><path d="M433.7 360.7 472.2 335.7" stroke="#fff" stroke-width="1.38"/><path d="M436.5 365.1 475.1 340.0" stroke="#fff" stroke-width="1.38"/><path d="M439.3 369.4 477.9 344.4" stroke="#fff" stroke-width="1.38"/><path d="M442.2 373.8 480.7 348.8" stroke="#fff" stroke-width="1.38"/><path d="M445.0 378.2 483.6 353.1" stroke="#fff" stroke-width="1.38"/><path d="M447.8 382.5 486.4 357.5" stroke="#fff" stroke-width="1.38"/><path d="M428.0 352.0 447.6 382.2" stroke="#fff" stroke-width="1.38"/><path d="M432.3 349.2 451.9 379.4" stroke="#fff" stroke-width="1.38"/><path d="M436.6 346.4 456.2 376.6" stroke="#fff" stroke-width="1.38"/><path d="M440.8 343.7 460.4 373.9" stroke="#fff" stroke-width="1.38"/><path d="M445.1 340.9 464.7 371.1" stroke="#fff" stroke-width="1.38"/><path d="M449.4 338.1 469.0 368.3" stroke="#fff" stroke-width="1.38"/><path d="M453.7 335.3 473.3 365.5" stroke="#fff" stroke-width="1.38"/><path d="M457.9 332.6 477.5 362.7" stroke="#fff" stroke-width="1.38"/><path d="M462.2 329.8 481.8 360.0" stroke="#fff" stroke-width="1.38"/><path d="M466.5 327.0 486.1 357.2" stroke="#fff" stroke-width="1.38"/><path d="M474.0 334.0 486.0 336.5" stroke="#fff" stroke-width="1.38"/><path d="M472.4 340.3 484.4 342.8" stroke="#fff" stroke-width="1.38"/><path d="M470.8 346.6 482.8 349.1" stroke="#fff" stroke-width="1.38"/><path d="M469.2 352.9 481.2 355.4" stroke="#fff" stroke-width="1.38"/><path d="M467.6 359.2 479.6 361.7" stroke="#fff" stroke-width="1.38"/><path d="M466.0 365.5 478.0 368.0" stroke="#fff" stroke-width="1.38"/><path d="M464.4 371.8 476.4 374.3" stroke="#fff" stroke-width="1.38"/><path d="M462.8 378.1 474.8 380.6" stroke="#fff" stroke-width="1.38"/><path d="M461.2 384.4 473.2 386.9" stroke="#fff" stroke-width="1.38"/><path d="M477.0 331.0 463.0 390.0" stroke="#fff" stroke-width="1.38"/><path d="M484.0 334.0 470.0 392.0" stroke="#fff" stroke-width="1.38"/><path d="M452.0 384.0 466.0 398.0" stroke="#fff" stroke-width="1.38"/><path d="M457.5 380.4 471.5 394.4" stroke="#fff" stroke-width="1.38"/><path d="M463.0 376.8 477.0 390.8" stroke="#fff" stroke-width="1.38"/><path d="M468.5 373.2 482.5 387.2" stroke="#fff" stroke-width="1.38"/><path d="M474.0 369.6 488.0 383.6" stroke="#fff" stroke-width="1.38"/><path d="M452.0 384.0 474.0 370.0" stroke="#fff" stroke-width="1.38"/><path d="M456.7 388.7 478.7 374.7" stroke="#fff" stroke-width="1.38"/><path d="M461.4 393.4 483.4 379.4" stroke="#fff" stroke-width="1.38"/><path d="M466.1 398.1 488.1 384.1" stroke="#fff" stroke-width="1.38"/><path d="M417.0 313.0 423.0 318.0 421.0 326.0 415.0 333.0 419.0 340.0 428.0 343.0" stroke="#fff" stroke-width="2.75"/><path d="M424.0 309.0 431.0 313.0 438.0 311.0 446.0 306.0" stroke="#fff" stroke-width="1.50"/><path d="M430.0 318.0 436.0 322.0 444.0 318.0 449.0 312.0" stroke="#fff" stroke-width="1.50"/><path d="M419.0 340.0 432.0 333.0 441.0 327.0 448.0 318.0 452.0 309.0" stroke="#fff" stroke-width="2.00"/><path d="M428.0 343.0 440.0 337.0 450.0 330.0" stroke="#fff" stroke-width="1.50"/><path d="M436.0 322.0 432.0 333.0" stroke="#fff" stroke-width="1.38"/><path d="M441.0 313.0 441.0 327.0" stroke="#fff" stroke-width="1.38"/><ellipse cx="422.500" cy="327" rx="4" ry="6" stroke="#fff" stroke-width="2"/><path d="M411.0 339.0 428.0 327.0 446.0 314.0" stroke="#fff" stroke-width="2.50"/><path d="M413.0 342.5 430.0 330.5 448.0 317.5" stroke="#fff" stroke-width="1.62"/><path d="M416.0 317.0 432.0 313.0 448.0 308.0" stroke="#fff" stroke-width="1.62"/><path d="M425.0 316.0 429.0 322.0 427.0 328.0" stroke="#fff" stroke-width="1.50"/><path d="M436.0 311.0 440.0 319.0 446.0 322.0" stroke="#fff" stroke-width="1.50"/><path d="M457.0 318.0 464.0 331.0" stroke="#fff" stroke-width="1.38"/><path d="M461.5 315.5 468.5 328.5" stroke="#fff" stroke-width="1.38"/><path d="M466.0 313.0 473.0 326.0" stroke="#fff" stroke-width="1.38"/><path d="M470.5 310.5 477.5 323.5" stroke="#fff" stroke-width="1.38"/><path d="M456.0 317.0 472.0 309.0" stroke="#fff" stroke-width="1.38"/><path d="M458.3 321.3 474.3 313.3" stroke="#fff" stroke-width="1.38"/><path d="M460.6 325.6 476.6 317.6" stroke="#fff" stroke-width="1.38"/><path d="M462.9 329.9 478.9 321.9" stroke="#fff" stroke-width="1.38"/><path d="M423.0 261.0 433.0 258.5 444.0 255.5 448.0 261.0 453.0 268.0 460.0 279.0 467.0 289.0 471.0 297.5 473.0 304.0 478.0 315.4 478.5 327.8 473.0 342.0 467.0 356.0 462.0 369.0 455.0 375.0 440.0 377.0 420.5 377.5 405.2 375.6 400.0 371.0" stroke="#35dce4" stroke-width="3.20"/><path d="M481.4 293.0 470.8 297.7 447.8 304.8 423.0 310.0 400.0 320.7" stroke="#35dce4" stroke-width="3.00"/><path d="M445.6 258.5 425.0 266.5 405.4 275.2 383.6 295.4" stroke="#35dce4" stroke-width="5.00"/><path d="M392.0 305.0 381.0 320.0 374.0 334.0" stroke="#35dce4" stroke-width="5.00"/><path d="M374 372L400 372L397 380L392.500 386L394 392L388 394L381 388L377.500 380Z" fill="#35dce4"/><path d="M353.4 338.0 365.0 338.0" stroke="#35dce4" stroke-width="5.00"/><circle cx="387.9" cy="280.3" r="2.4" fill="#000000"/><rect x="388.8" y="281.5" width="3.5" height="2.8" fill="#30e0e0"/><circle cx="396.8" cy="282.4" r="1.6" fill="#14f028"/><circle cx="370.6" cy="266.2" r="1.7" fill="#14f028"/><circle cx="387.4" cy="291.0" r="2.8" fill="#14f028"/><circle cx="397.1" cy="276.4" r="3.4" fill="#14f028"/><rect x="403.0" y="284.3" width="4.0" height="3.2" fill="#14f028"/><rect x="382.5" y="259.4" width="6.0" height="4.8" fill="#38ff5a"/><rect x="368.9" y="269.3" width="5.9" height="4.7" fill="#000000"/><rect x="375.8" y="260.4" width="6.1" height="4.9" fill="#14f028"/><rect x="389.7" y="273.7" width="5.8" height="4.7" fill="#14f028"/><circle cx="386.5" cy="267.1" r="3.3" fill="#14f028"/><rect x="374.5" y="271.8" width="5.5" height="4.4" fill="#d01818"/><circle cx="382.5" cy="270.3" r="1.8" fill="#14f028"/><circle cx="384.4" cy="276.2" r="2.5" fill="#000000"/><circle cx="394.6" cy="275.0" r="1.7" fill="#14f028"/><rect x="391.3" y="267.8" width="5.8" height="4.6" fill="#14f028"/><rect x="375.3" y="278.1" width="5.4" height="4.3" fill="#d01818"/><circle cx="375.8" cy="273.0" r="1.8" fill="#38ff5a"/><rect x="395.1" y="283.8" width="3.7" height="3.0" fill="#38ff5a"/><circle cx="398.8" cy="295.6" r="2.7" fill="#14f028"/><circle cx="400.1" cy="271.1" r="1.7" fill="#ffffff"/><circle cx="400.4" cy="293.2" r="2.9" fill="#109030"/><circle cx="408.3" cy="272.4" r="3.2" fill="#38ff5a"/><circle cx="386.4" cy="289.0" r="2.6" fill="#d01818"/><circle cx="384.8" cy="281.1" r="1.7" fill="#38ff5a"/><circle cx="400.0" cy="273.8" r="2.6" fill="#109030"/><circle cx="394.5" cy="277.3" r="2.9" fill="#14f028"/><rect x="393.4" y="292.7" width="3.2" height="2.6" fill="#14f028"/><circle cx="397.0" cy="275.8" r="2.2" fill="#000000"/><circle cx="376.7" cy="275.4" r="3.2" fill="#30e0e0"/><circle cx="384.9" cy="281.2" r="1.8" fill="#14f028"/><rect x="401.5" y="288.6" width="6.6" height="5.3" fill="#109030"/><circle cx="375.4" cy="276.1" r="2.0" fill="#14f028"/><circle cx="395.5" cy="277.8" r="3.1" fill="#14f028"/><rect x="391.5" y="269.4" width="3.3" height="2.6" fill="#30e0e0"/><circle cx="374.2" cy="260.8" r="2.4" fill="#38ff5a"/><rect x="394.0" y="287.4" width="5.7" height="4.5" fill="#000000"/><circle cx="388.9" cy="265.8" r="2.4" fill="#14f028"/><circle cx="375.9" cy="269.3" r="2.9" fill="#14f028"/><circle cx="395.0" cy="287.7" r="3.0" fill="#14f028"/><circle cx="388.0" cy="282.8" r="2.3" fill="#000000"/><circle cx="406.7" cy="289.3" r="2.4" fill="#000000"/><circle cx="404.0" cy="283.4" r="2.0" fill="#109030"/><circle cx="391.6" cy="289.0" r="3.2" fill="#14f028"/><circle cx="383.3" cy="262.1" r="2.6" fill="#14f028"/><circle cx="374.2" cy="264.6" r="2.9" fill="#14f028"/><rect x="395.0" y="292.3" width="6.6" height="5.3" fill="#14f028"/><circle cx="377.7" cy="279.0" r="2.9" fill="#14f028"/><circle cx="391.0" cy="291.1" r="2.2" fill="#38ff5a"/><circle cx="405.2" cy="293.2" r="3.1" fill="#14f028"/><circle cx="391.1" cy="280.8" r="2.6" fill="#14f028"/><circle cx="410.7" cy="278.6" r="3.0" fill="#14f028"/><circle cx="389.6" cy="285.3" r="2.6" fill="#14f028"/><circle cx="379.8" cy="277.0" r="2.4" fill="#14f028"/><circle cx="407.6" cy="277.1" r="1.9" fill="#14f028"/><circle cx="376.5" cy="267.6" r="2.2" fill="#38ff5a"/><circle cx="376.7" cy="279.2" r="2.3" fill="#14f028"/><circle cx="396.1" cy="279.1" r="2.7" fill="#d01818"/><circle cx="403.7" cy="293.3" r="2.2" fill="#14f028"/><circle cx="379.4" cy="262.7" r="2.4" fill="#30e0e0"/><rect x="371.9" y="273.0" width="3.3" height="2.6" fill="#38ff5a"/><circle cx="398.0" cy="293.6" r="1.8" fill="#000000"/><rect x="399.4" y="276.6" width="3.9" height="3.1" fill="#38ff5a"/><rect x="390.4" y="277.1" width="3.7" height="3.0" fill="#38ff5a"/><circle cx="372.2" cy="261.4" r="2.4" fill="#000000"/><circle cx="382.4" cy="276.7" r="2.4" fill="#14f028"/><rect x="386.0" y="285.5" width="3.9" height="3.1" fill="#14f028"/><circle cx="407.3" cy="289.5" r="3.1" fill="#109030"/><circle cx="385.8" cy="281.8" r="3.4" fill="#14f028"/><circle cx="400.8" cy="288.6" r="2.3" fill="#30e0e0"/><circle cx="406.7" cy="285.4" r="3.0" fill="#30e0e0"/><circle cx="383.0" cy="276.8" r="2.2" fill="#14f028"/><circle cx="409.6" cy="284.3" r="2.8" fill="#14f028"/><circle cx="391.5" cy="273.8" r="2.8" fill="#ffffff"/><rect x="398.8" y="267.4" width="3.4" height="2.7" fill="#14f028"/><circle cx="384.5" cy="262.7" r="3.2" fill="#14f028"/><circle cx="396.1" cy="289.8" r="2.7" fill="#14f028"/><circle cx="375.0" cy="276.9" r="2.5" fill="#14f028"/><rect x="384.3" y="277.2" width="4.5" height="3.6" fill="#38ff5a"/><rect x="393.9" y="278.0" width="5.8" height="4.6" fill="#14f028"/><circle cx="369.9" cy="265.0" r="2.3" fill="#30e0e0"/><circle cx="386.9" cy="277.1" r="2.0" fill="#e8e030"/><circle cx="409.2" cy="286.5" r="3.4" fill="#14f028"/><circle cx="395.5" cy="276.3" r="1.7" fill="#14f028"/><rect x="371.1" y="273.9" width="4.8" height="3.9" fill="#38ff5a"/><circle cx="393.6" cy="274.9" r="2.6" fill="#30e0e0"/><circle cx="378.5" cy="263.3" r="3.0" fill="#000000"/><circle cx="383.8" cy="269.3" r="2.6" fill="#38ff5a"/><circle cx="395.9" cy="287.6" r="2.0" fill="#14f028"/><circle cx="379.9" cy="275.2" r="1.8" fill="#38ff5a"/><circle cx="371.2" cy="262.3" r="2.6" fill="#38ff5a"/><circle cx="384.4" cy="277.2" r="2.2" fill="#14f028"/><rect x="393.1" y="286.3" width="4.7" height="3.8" fill="#14f028"/><rect x="400.3" y="270.3" width="6.8" height="5.4" fill="#38ff5a"/><circle cx="392.1" cy="287.4" r="2.4" fill="#000000"/><circle cx="371.5" cy="262.2" r="2.5" fill="#38ff5a"/><rect x="369.6" y="265.7" width="3.5" height="2.8" fill="#38ff5a"/><circle cx="399.9" cy="285.4" r="1.9" fill="#14f028"/><circle cx="399.9" cy="272.9" r="2.9" fill="#14f028"/><rect x="406.0" y="273.9" width="4.3" height="3.4" fill="#30e0e0"/><circle cx="383.9" cy="272.9" r="2.3" fill="#14f028"/><rect x="400.5" y="277.5" width="5.2" height="4.2" fill="#30e0e0"/><circle cx="401.4" cy="292.5" r="1.6" fill="#14f028"/><circle cx="391.9" cy="280.6" r="2.8" fill="#000000"/><circle cx="437.7" cy="251.5" r="3.0" fill="#14f028"/><circle cx="420.1" cy="261.4" r="3.0" fill="#14f028"/><circle cx="424.1" cy="254.0" r="2.6" fill="#38ff5a"/><circle cx="427.9" cy="256.1" r="2.9" fill="#d01818"/><circle cx="431.4" cy="263.0" r="3.3" fill="#14f028"/><circle cx="431.1" cy="262.8" r="2.5" fill="#38ff5a"/><rect x="419.3" y="261.4" width="4.8" height="3.8" fill="#d01818"/><rect x="419.8" y="255.0" width="6.7" height="5.4" fill="#14f028"/><rect x="427.6" y="259.0" width="3.7" height="3.0" fill="#38ff5a"/><rect x="421.7" y="261.2" width="4.3" height="3.5" fill="#14f028"/><circle cx="436.9" cy="255.6" r="3.1" fill="#14f028"/><circle cx="424.5" cy="266.0" r="2.3" fill="#38ff5a"/><circle cx="427.6" cy="259.5" r="2.2" fill="#14f028"/><circle cx="434.4" cy="254.3" r="2.6" fill="#14f028"/><rect x="430.8" y="251.0" width="4.6" height="3.7" fill="#14f028"/><rect x="436.3" y="256.6" width="6.8" height="5.4" fill="#14f028"/><circle cx="431.4" cy="252.7" r="1.8" fill="#38ff5a"/><circle cx="435.9" cy="251.7" r="2.5" fill="#14f028"/><rect x="422.3" y="261.6" width="6.5" height="5.2" fill="#14f028"/><rect x="436.0" y="251.6" width="5.3" height="4.2" fill="#14f028"/><rect x="436.9" y="254.1" width="3.8" height="3.1" fill="#14f028"/><rect x="426.8" y="260.6" width="5.8" height="4.6" fill="#14f028"/><circle cx="427.9" cy="258.3" r="3.1" fill="#d01818"/><rect x="433.2" y="252.2" width="5.1" height="4.1" fill="#14f028"/><circle cx="423.2" cy="261.1" r="2.4" fill="#14f028"/><rect x="422.6" y="253.8" width="5.7" height="4.6" fill="#14f028"/><circle cx="423.0" cy="263.2" r="3.3" fill="#14f028"/><rect x="434.1" y="254.4" width="3.9" height="3.1" fill="#38ff5a"/><circle cx="420.4" cy="262.2" r="2.1" fill="#14f028"/><rect x="436.8" y="258.9" width="4.3" height="3.5" fill="#14f028"/><circle cx="419.8" cy="266.6" r="2.6" fill="#14f028"/><circle cx="427.6" cy="256.0" r="1.8" fill="#14f028"/><rect x="435.9" y="260.4" width="3.7" height="2.9" fill="#14f028"/><circle cx="426.6" cy="261.7" r="2.4" fill="#14f028"/><circle cx="431.3" cy="304.6" r="2.1" fill="#38ff5a"/><rect x="431.7" y="295.5" width="5.4" height="4.3" fill="#14f028"/><circle cx="423.9" cy="301.9" r="2.2" fill="#30e0e0"/><circle cx="426.9" cy="288.9" r="2.2" fill="#14f028"/><circle cx="428.8" cy="292.2" r="2.5" fill="#000000"/><circle cx="424.7" cy="298.0" r="2.3" fill="#38ff5a"/><circle cx="436.8" cy="304.4" r="2.0" fill="#38ff5a"/><circle cx="417.8" cy="306.4" r="2.8" fill="#14f028"/><rect x="413.2" y="296.2" width="3.7" height="3.0" fill="#14f028"/><circle cx="427.8" cy="291.7" r="3.1" fill="#38ff5a"/><circle cx="426.0" cy="304.1" r="2.2" fill="#14f028"/><circle cx="413.9" cy="293.7" r="2.1" fill="#38ff5a"/><rect x="414.2" y="295.8" width="5.9" height="4.7" fill="#14f028"/><circle cx="428.1" cy="287.6" r="2.9" fill="#000000"/><circle cx="421.1" cy="299.6" r="3.2" fill="#38ff5a"/><circle cx="432.6" cy="305.4" r="2.6" fill="#14f028"/><circle cx="434.4" cy="297.1" r="2.6" fill="#14f028"/><circle cx="418.7" cy="285.4" r="3.4" fill="#109030"/><rect x="423.3" y="300.5" width="5.7" height="4.6" fill="#14f028"/><rect x="410.8" y="293.2" width="5.0" height="4.0" fill="#14f028"/><circle cx="428.8" cy="297.2" r="2.4" fill="#14f028"/><circle cx="416.4" cy="285.7" r="3.5" fill="#000000"/><circle cx="433.4" cy="294.5" r="2.2" fill="#30e0e0"/><rect x="422.1" y="304.0" width="6.5" height="5.2" fill="#14f028"/><rect x="422.3" y="306.0" width="4.5" height="3.6" fill="#14f028"/><circle cx="418.8" cy="285.6" r="3.3" fill="#000000"/><circle cx="419.6" cy="298.6" r="1.9" fill="#14f028"/><circle cx="418.3" cy="296.5" r="3.6" fill="#000000"/><rect x="412.2" y="288.7" width="6.8" height="5.5" fill="#000000"/><circle cx="432.6" cy="292.9" r="2.1" fill="#14f028"/><rect x="425.2" y="287.3" width="3.8" height="3.0" fill="#d01818"/><circle cx="429.6" cy="291.8" r="3.4" fill="#000000"/><rect x="411.0" y="299.3" width="5.2" height="4.2" fill="#000000"/><rect x="413.9" y="290.0" width="4.3" height="3.4" fill="#109030"/><circle cx="416.4" cy="300.6" r="2.5" fill="#30e0e0"/><circle cx="433.9" cy="298.7" r="2.3" fill="#14f028"/><circle cx="428.0" cy="290.9" r="2.0" fill="#38ff5a"/><circle cx="421.9" cy="297.2" r="1.9" fill="#14f028"/><rect x="415.7" y="288.7" width="3.9" height="3.1" fill="#30e0e0"/><rect x="427.6" y="287.9" width="5.6" height="4.5" fill="#14f028"/><circle cx="410.9" cy="295.5" r="2.5" fill="#30e0e0"/><circle cx="423.5" cy="288.5" r="3.0" fill="#38ff5a"/><circle cx="427.8" cy="303.6" r="2.7" fill="#14f028"/><circle cx="428.5" cy="297.0" r="2.1" fill="#000000"/><circle cx="414.5" cy="299.2" r="2.6" fill="#14f028"/><rect x="428.6" y="301.6" width="5.4" height="4.3" fill="#14f028"/><circle cx="425.7" cy="296.5" r="2.9" fill="#14f028"/><rect x="423.4" y="304.2" width="4.1" height="3.3" fill="#14f028"/><circle cx="423.4" cy="294.9" r="2.3" fill="#14f028"/><rect x="423.1" y="295.8" width="4.5" height="3.6" fill="#30e0e0"/><circle cx="374.5" cy="299.1" r="2.7" fill="#14f028"/><rect x="368.4" y="323.4" width="6.2" height="4.9" fill="#14f028"/><circle cx="370.8" cy="304.8" r="3.1" fill="#30e0e0"/><circle cx="358.0" cy="317.1" r="2.0" fill="#14f028"/><rect x="353.4" y="318.3" width="6.8" height="5.4" fill="#30e0e0"/><circle cx="384.1" cy="333.5" r="2.0" fill="#14f028"/><rect x="361.0" y="314.4" width="4.7" height="3.8" fill="#14f028"/><circle cx="404.4" cy="333.0" r="2.1" fill="#14f028"/><rect x="367.7" y="317.8" width="4.5" height="3.6" fill="#30e0e0"/><circle cx="396.9" cy="299.9" r="2.9" fill="#14f028"/><circle cx="393.0" cy="340.4" r="2.3" fill="#14f028"/><rect x="376.9" y="333.5" width="4.5" height="3.6" fill="#14f028"/><circle cx="390.3" cy="305.0" r="2.0" fill="#14f028"/><circle cx="374.4" cy="318.9" r="2.8" fill="#30e0e0"/><circle cx="367.5" cy="315.8" r="2.8" fill="#14f028"/><circle cx="366.0" cy="309.9" r="3.3" fill="#14f028"/><circle cx="371.7" cy="314.7" r="3.3" fill="#14f028"/><rect x="402.9" y="331.1" width="3.3" height="2.6" fill="#e8e030"/><circle cx="379.4" cy="301.1" r="2.2" fill="#000000"/><rect x="386.2" y="298.1" width="4.1" height="3.2" fill="#14f028"/><circle cx="364.0" cy="326.2" r="2.2" fill="#14f028"/><circle cx="389.9" cy="303.7" r="2.1" fill="#30e0e0"/><circle cx="398.0" cy="304.2" r="2.1" fill="#14f028"/><rect x="378.7" y="314.3" width="4.0" height="3.2" fill="#000000"/><circle cx="376.8" cy="307.6" r="1.6" fill="#14f028"/><circle cx="391.4" cy="336.6" r="2.1" fill="#30e0e0"/><circle cx="414.7" cy="307.6" r="2.8" fill="#30e0e0"/><circle cx="411.3" cy="308.5" r="1.8" fill="#38ff5a"/><circle cx="379.9" cy="299.9" r="2.2" fill="#14f028"/><rect x="370.0" y="302.8" width="4.9" height="3.9" fill="#14f028"/><circle cx="397.9" cy="308.8" r="2.2" fill="#14f028"/><circle cx="364.0" cy="325.5" r="2.6" fill="#30e0e0"/><circle cx="378.0" cy="300.1" r="1.7" fill="#14f028"/><rect x="390.6" y="318.3" width="4.1" height="3.3" fill="#14f028"/><circle cx="376.9" cy="340.7" r="2.1" fill="#38ff5a"/><circle cx="366.3" cy="320.0" r="3.3" fill="#38ff5a"/><circle cx="392.0" cy="343.2" r="2.7" fill="#30e0e0"/><circle cx="381.1" cy="317.4" r="3.1" fill="#14f028"/><circle cx="379.2" cy="341.6" r="1.8" fill="#14f028"/><rect x="372.5" y="313.2" width="3.7" height="3.0" fill="#30e0e0"/><circle cx="369.1" cy="330.3" r="1.6" fill="#14f028"/><circle cx="380.0" cy="308.7" r="2.8" fill="#14f028"/><rect x="391.9" y="321.8" width="6.7" height="5.4" fill="#000000"/><circle cx="376.9" cy="340.4" r="2.9" fill="#14f028"/><circle cx="399.3" cy="344.2" r="1.9" fill="#000000"/><circle cx="386.4" cy="324.6" r="2.1" fill="#14f028"/><rect x="387.1" y="306.9" width="4.4" height="3.5" fill="#14f028"/><rect x="386.2" y="301.8" width="3.4" height="2.8" fill="#14f028"/><circle cx="400.5" cy="302.5" r="3.0" fill="#14f028"/><rect x="363.0" y="338.1" width="3.4" height="2.7" fill="#000000"/><rect x="384.6" y="333.7" width="5.8" height="4.6" fill="#14f028"/><circle cx="401.2" cy="313.0" r="3.0" fill="#14f028"/><circle cx="408.7" cy="324.8" r="2.9" fill="#14f028"/><circle cx="408.8" cy="336.3" r="2.3" fill="#14f028"/><circle cx="369.2" cy="306.0" r="2.7" fill="#14f028"/><circle cx="399.4" cy="317.5" r="2.3" fill="#38ff5a"/><circle cx="401.1" cy="302.8" r="2.1" fill="#14f028"/><circle cx="375.8" cy="298.3" r="2.5" fill="#38ff5a"/><circle cx="374.4" cy="336.2" r="2.1" fill="#000000"/><circle cx="394.8" cy="334.5" r="2.3" fill="#30e0e0"/><rect x="388.1" y="334.7" width="3.8" height="3.1" fill="#14f028"/><rect x="413.8" y="307.9" width="3.6" height="2.9" fill="#14f028"/><circle cx="363.5" cy="327.6" r="2.0" fill="#14f028"/><circle cx="378.1" cy="309.7" r="1.7" fill="#14f028"/><circle cx="374.4" cy="300.8" r="2.5" fill="#14f028"/><circle cx="367.3" cy="339.5" r="2.3" fill="#14f028"/><circle cx="380.1" cy="299.8" r="2.8" fill="#38ff5a"/><circle cx="372.3" cy="343.0" r="3.4" fill="#000000"/><rect x="407.4" y="331.2" width="3.3" height="2.6" fill="#14f028"/><rect x="375.2" y="331.9" width="5.1" height="4.0" fill="#14f028"/><circle cx="407.5" cy="335.8" r="2.3" fill="#30e0e0"/><circle cx="408.6" cy="334.6" r="1.8" fill="#30e0e0"/><rect x="377.3" y="329.0" width="6.5" height="5.2" fill="#14f028"/><circle cx="392.1" cy="308.1" r="2.3" fill="#14f028"/><rect x="405.3" y="313.1" width="4.5" height="3.6" fill="#38ff5a"/><circle cx="413.7" cy="312.8" r="2.2" fill="#14f028"/><rect x="365.1" y="331.2" width="5.6" height="4.5" fill="#38ff5a"/><rect x="358.6" y="302.1" width="4.8" height="3.8" fill="#14f028"/><circle cx="387.2" cy="316.8" r="2.6" fill="#14f028"/><rect x="364.6" y="337.8" width="5.9" height="4.7" fill="#14f028"/><rect x="414.7" y="305.5" width="5.7" height="4.6" fill="#14f028"/><rect x="369.9" y="328.4" width="4.4" height="3.5" fill="#30e0e0"/><circle cx="377.6" cy="345.5" r="2.7" fill="#14f028"/><circle cx="396.5" cy="307.4" r="3.2" fill="#38ff5a"/><circle cx="395.5" cy="321.7" r="1.8" fill="#38ff5a"/><circle cx="399.5" cy="319.2" r="2.4" fill="#109030"/><rect x="366.7" y="324.4" width="5.1" height="4.0" fill="#38ff5a"/><circle cx="395.4" cy="318.9" r="2.7" fill="#38ff5a"/><rect x="361.1" y="317.6" width="5.9" height="4.7" fill="#30e0e0"/><circle cx="380.5" cy="339.5" r="3.4" fill="#14f028"/><circle cx="369.5" cy="338.2" r="3.3" fill="#109030"/><circle cx="406.6" cy="322.1" r="1.7" fill="#30e0e0"/><circle cx="401.0" cy="309.3" r="2.4" fill="#d01818"/><rect x="408.4" y="304.4" width="5.5" height="4.4" fill="#14f028"/><circle cx="390.6" cy="335.6" r="2.0" fill="#14f028"/><circle cx="410.4" cy="334.8" r="3.2" fill="#38ff5a"/><rect x="362.4" y="313.6" width="3.3" height="2.7" fill="#14f028"/><circle cx="411.1" cy="337.9" r="1.9" fill="#14f028"/><circle cx="410.0" cy="327.2" r="1.7" fill="#e8e030"/><rect x="364.7" y="325.5" width="5.8" height="4.7" fill="#000000"/><rect x="395.9" y="316.3" width="4.4" height="3.5" fill="#14f028"/><rect x="392.7" y="308.4" width="5.7" height="4.6" fill="#38ff5a"/><rect x="360.6" y="329.5" width="3.7" height="2.9" fill="#14f028"/><circle cx="416.1" cy="326.9" r="2.0" fill="#14f028"/><circle cx="399.6" cy="333.1" r="2.2" fill="#14f028"/><circle cx="363.7" cy="327.9" r="3.1" fill="#14f028"/><circle cx="384.1" cy="321.8" r="2.2" fill="#30e0e0"/><rect x="366.3" y="322.8" width="6.3" height="5.1" fill="#14f028"/><circle cx="410.4" cy="330.2" r="3.3" fill="#14f028"/><circle cx="403.1" cy="326.5" r="1.7" fill="#14f028"/><circle cx="372.6" cy="318.6" r="2.1" fill="#30e0e0"/><circle cx="398.4" cy="309.0" r="1.8" fill="#14f028"/><circle cx="370.6" cy="317.6" r="3.1" fill="#14f028"/><rect x="389.8" y="321.2" width="6.4" height="5.1" fill="#14f028"/><rect x="375.2" y="313.1" width="5.6" height="4.5" fill="#30e0e0"/><circle cx="355.5" cy="328.0" r="2.3" fill="#14f028"/><circle cx="374.9" cy="329.9" r="3.3" fill="#38ff5a"/><rect x="405.3" y="326.1" width="6.8" height="5.4" fill="#30e0e0"/><circle cx="384.5" cy="316.7" r="2.0" fill="#109030"/><circle cx="367.8" cy="315.1" r="2.3" fill="#14f028"/><circle cx="359.5" cy="305.2" r="2.7" fill="#109030"/><rect x="367.7" y="334.4" width="6.0" height="4.8" fill="#30e0e0"/><circle cx="384.9" cy="297.8" r="3.3" fill="#000000"/><rect x="386.3" y="320.7" width="6.0" height="4.8" fill="#14f028"/><rect x="385.6" y="301.6" width="3.7" height="2.9" fill="#38ff5a"/><circle cx="387.8" cy="311.4" r="2.0" fill="#d01818"/><circle cx="357.6" cy="307.7" r="2.6" fill="#14f028"/><circle cx="410.1" cy="302.1" r="1.9" fill="#000000"/><circle cx="388.6" cy="316.9" r="3.2" fill="#38ff5a"/><circle cx="381.3" cy="297.5" r="3.1" fill="#14f028"/><rect x="399.4" y="303.4" width="3.3" height="2.6" fill="#38ff5a"/><rect x="370.7" y="341.8" width="6.3" height="5.0" fill="#38ff5a"/><circle cx="381.5" cy="300.8" r="1.8" fill="#14f028"/><circle cx="375.7" cy="321.0" r="3.2" fill="#109030"/><rect x="389.2" y="319.7" width="4.6" height="3.7" fill="#e8e030"/><circle cx="402.8" cy="309.7" r="2.4" fill="#14f028"/><circle cx="377.7" cy="318.1" r="1.7" fill="#14f028"/><rect x="355.8" y="321.0" width="4.6" height="3.7" fill="#38ff5a"/><rect x="358.1" y="313.2" width="4.9" height="4.0" fill="#14f028"/><circle cx="403.5" cy="320.9" r="2.3" fill="#14f028"/><circle cx="393.5" cy="315.1" r="2.7" fill="#14f028"/><rect x="371.8" y="319.0" width="5.9" height="4.7" fill="#38ff5a"/><circle cx="360.1" cy="309.3" r="3.0" fill="#14f028"/><rect x="407.9" y="314.5" width="5.6" height="4.5" fill="#14f028"/><circle cx="375.7" cy="312.6" r="3.0" fill="#000000"/><circle cx="357.7" cy="334.4" r="2.7" fill="#14f028"/><circle cx="415.2" cy="328.3" r="3.3" fill="#14f028"/><circle cx="392.3" cy="297.3" r="2.4" fill="#30e0e0"/><circle cx="358.9" cy="335.3" r="3.0" fill="#14f028"/><circle cx="383.5" cy="318.4" r="2.2" fill="#14f028"/><rect x="407.2" y="328.2" width="3.6" height="2.9" fill="#38ff5a"/><rect x="371.2" y="341.1" width="6.5" height="5.2" fill="#38ff5a"/><circle cx="381.4" cy="323.3" r="1.8" fill="#000000"/><circle cx="385.2" cy="298.5" r="2.3" fill="#14f028"/><circle cx="415.3" cy="321.2" r="2.3" fill="#30e0e0"/><rect x="358.3" y="331.3" width="5.3" height="4.2" fill="#14f028"/><circle cx="376.9" cy="305.0" r="2.7" fill="#14f028"/><circle cx="379.6" cy="325.1" r="2.2" fill="#000000"/><rect x="382.9" y="342.8" width="5.7" height="4.6" fill="#14f028"/><rect x="369.2" y="331.1" width="4.1" height="3.3" fill="#38ff5a"/><circle cx="408.4" cy="315.5" r="2.4" fill="#30e0e0"/><circle cx="390.9" cy="344.8" r="2.4" fill="#e8e030"/><circle cx="369.3" cy="333.9" r="2.2" fill="#14f028"/><rect x="353.7" y="329.2" width="5.2" height="4.1" fill="#38ff5a"/><rect x="401.5" y="334.1" width="6.0" height="4.8" fill="#14f028"/><circle cx="367.2" cy="323.2" r="1.8" fill="#38ff5a"/><circle cx="392.4" cy="341.1" r="2.8" fill="#ffffff"/><rect x="371.1" y="337.4" width="4.2" height="3.3" fill="#30e0e0"/><circle cx="370.7" cy="311.4" r="1.8" fill="#14f028"/><circle cx="372.0" cy="311.0" r="2.5" fill="#14f028"/><circle cx="364.6" cy="339.1" r="2.7" fill="#000000"/><circle cx="402.4" cy="323.2" r="3.3" fill="#109030"/><circle cx="371.2" cy="299.7" r="2.3" fill="#30e0e0"/><circle cx="369.4" cy="319.2" r="2.9" fill="#14f028"/><circle cx="387.4" cy="324.7" r="2.0" fill="#14f028"/><circle cx="397.4" cy="300.5" r="1.8" fill="#e8e030"/><rect x="371.6" y="337.5" width="5.6" height="4.5" fill="#14f028"/><circle cx="356.0" cy="325.0" r="2.8" fill="#30e0e0"/><rect x="403.2" y="320.5" width="5.1" height="4.1" fill="#14f028"/><circle cx="388.8" cy="314.4" r="2.0" fill="#38ff5a"/><circle cx="381.5" cy="320.8" r="2.5" fill="#14f028"/><circle cx="362.9" cy="311.7" r="2.9" fill="#14f028"/><circle cx="386.3" cy="325.9" r="2.7" fill="#30e0e0"/><circle cx="388.3" cy="344.0" r="1.8" fill="#14f028"/><circle cx="399.4" cy="322.5" r="3.0" fill="#38ff5a"/><rect x="406.8" y="315.2" width="4.4" height="3.6" fill="#14f028"/><rect x="402.3" y="307.8" width="5.1" height="4.1" fill="#38ff5a"/><rect x="395.4" y="316.7" width="6.4" height="5.1" fill="#14f028"/><rect x="360.9" y="307.0" width="6.0" height="4.8" fill="#14f028"/><rect x="367.2" y="327.0" width="5.1" height="4.1" fill="#14f028"/><rect x="409.7" y="304.3" width="4.3" height="3.4" fill="#14f028"/><rect x="399.4" y="328.0" width="5.1" height="4.1" fill="#d01818"/><circle cx="404.4" cy="309.0" r="2.3" fill="#14f028"/><circle cx="378.5" cy="314.5" r="3.4" fill="#ffffff"/><circle cx="362.9" cy="335.7" r="2.2" fill="#d01818"/><circle cx="379.0" cy="311.1" r="2.9" fill="#38ff5a"/><rect x="383.7" y="313.0" width="6.5" height="5.2" fill="#14f028"/><rect x="364.3" y="337.4" width="6.6" height="5.2" fill="#30e0e0"/><circle cx="401.2" cy="343.3" r="1.8" fill="#14f028"/><circle cx="412.2" cy="332.6" r="2.4" fill="#30e0e0"/><rect x="360.2" y="309.0" width="3.5" height="2.8" fill="#30e0e0"/><rect x="375.0" y="297.9" width="3.9" height="3.1" fill="#14f028"/><circle cx="388.8" cy="323.5" r="3.0" fill="#38ff5a"/><circle cx="368.7" cy="300.8" r="3.0" fill="#14f028"/><rect x="384.6" y="302.8" width="5.2" height="4.2" fill="#14f028"/><rect x="381.9" y="324.6" width="4.9" height="3.9" fill="#000000"/><circle cx="380.4" cy="299.5" r="1.9" fill="#14f028"/><circle cx="368.5" cy="336.2" r="2.8" fill="#38ff5a"/><circle cx="374.1" cy="299.0" r="2.7" fill="#14f028"/><circle cx="385.2" cy="327.6" r="2.2" fill="#14f028"/><rect x="389.9" y="315.5" width="4.9" height="3.9" fill="#38ff5a"/><circle cx="414.3" cy="308.4" r="3.1" fill="#30e0e0"/><rect x="362.6" y="320.2" width="4.2" height="3.4" fill="#30e0e0"/><circle cx="401.7" cy="308.5" r="1.9" fill="#38ff5a"/><circle cx="372.7" cy="301.7" r="2.2" fill="#30e0e0"/><rect x="384.5" y="340.4" width="4.6" height="3.7" fill="#38ff5a"/><circle cx="386.8" cy="310.2" r="2.7" fill="#38ff5a"/><circle cx="359.9" cy="321.4" r="2.8" fill="#14f028"/><rect x="369.4" y="316.3" width="6.1" height="4.9" fill="#14f028"/><circle cx="408.7" cy="336.1" r="3.2" fill="#14f028"/><circle cx="382.1" cy="324.2" r="2.5" fill="#30e0e0"/><rect x="371.0" y="336.4" width="4.4" height="3.5" fill="#38ff5a"/><circle cx="368.2" cy="337.9" r="3.4" fill="#d01818"/><circle cx="399.2" cy="336.1" r="3.1" fill="#30e0e0"/><circle cx="365.6" cy="336.9" r="2.0" fill="#14f028"/><circle cx="376.6" cy="335.8" r="3.2" fill="#38ff5a"/><circle cx="396.5" cy="300.2" r="1.8" fill="#109030"/><circle cx="411.5" cy="312.2" r="2.8" fill="#14f028"/><circle cx="362.3" cy="332.6" r="3.2" fill="#14f028"/><circle cx="405.8" cy="339.8" r="3.3" fill="#38ff5a"/><rect x="384.8" y="314.5" width="3.3" height="2.6" fill="#14f028"/><circle cx="406.5" cy="308.2" r="3.0" fill="#109030"/><circle cx="388.0" cy="312.5" r="1.9" fill="#14f028"/><circle cx="399.3" cy="343.2" r="3.3" fill="#14f028"/><circle cx="373.2" cy="343.7" r="3.3" fill="#38ff5a"/><path d="M440.0 261.0 412.0 272.5 397.0 282.0 385.0 291.0" stroke="#30e0e0" stroke-width="4.00"/><path d="M390.0 308.0 381.0 320.0 375.0 330.0" stroke="#30e0e0" stroke-width="4.00"/><rect x="380.7" y="268.0" width="4.0" height="3.2" fill="#14f028"/><rect x="403.7" y="277.5" width="4.6" height="3.7" fill="#14f028"/><circle cx="378.6" cy="271.4" r="1.5" fill="#14f028"/><circle cx="396.1" cy="274.7" r="1.7" fill="#14f028"/><circle cx="387.1" cy="285.1" r="2.1" fill="#38ff5a"/><rect x="377.0" y="277.9" width="4.1" height="3.3" fill="#d01818"/><circle cx="400.0" cy="271.1" r="2.2" fill="#38ff5a"/><circle cx="388.1" cy="275.4" r="2.0" fill="#14f028"/><rect x="369.2" y="267.7" width="3.9" height="3.1" fill="#14f028"/><circle cx="386.7" cy="280.8" r="1.9" fill="#38ff5a"/><rect x="395.7" y="280.6" width="4.5" height="3.6" fill="#14f028"/><circle cx="370.4" cy="277.0" r="1.5" fill="#14f028"/><rect x="386.8" y="279.3" width="5.2" height="4.1" fill="#14f028"/><circle cx="381.4" cy="267.4" r="2.0" fill="#38ff5a"/><circle cx="380.3" cy="340.5" r="2.3" fill="#14f028"/><rect x="381.6" y="313.4" width="3.9" height="3.1" fill="#14f028"/><circle cx="395.2" cy="317.1" r="2.3" fill="#14f028"/><circle cx="385.3" cy="340.1" r="1.9" fill="#14f028"/><circle cx="380.5" cy="329.9" r="1.8" fill="#38ff5a"/><circle cx="416.7" cy="329.1" r="1.9" fill="#38ff5a"/><rect x="366.3" y="332.7" width="5.2" height="4.1" fill="#14f028"/><rect x="379.3" y="332.8" width="4.3" height="3.4" fill="#14f028"/><rect x="377.8" y="343.7" width="5.0" height="4.0" fill="#14f028"/><circle cx="392.5" cy="337.2" r="1.9" fill="#38ff5a"/><rect x="398.9" y="332.6" width="4.2" height="3.4" fill="#38ff5a"/><rect x="398.0" y="322.4" width="5.2" height="4.1" fill="#14f028"/><rect x="403.0" y="310.9" width="5.1" height="4.1" fill="#38ff5a"/><circle cx="391.4" cy="322.9" r="1.6" fill="#14f028"/><circle cx="413.0" cy="329.5" r="2.4" fill="#14f028"/><circle cx="363.6" cy="326.7" r="2.0" fill="#14f028"/><rect x="389.3" y="341.9" width="4.6" height="3.7" fill="#14f028"/><circle cx="373.8" cy="330.9" r="2.4" fill="#38ff5a"/><circle cx="372.1" cy="314.6" r="1.4" fill="#14f028"/><circle cx="397.4" cy="304.3" r="2.4" fill="#14f028"/><circle cx="370.5" cy="305.7" r="1.5" fill="#14f028"/><rect x="400.5" y="308.2" width="4.5" height="3.6" fill="#14f028"/><circle cx="408.0" cy="339.1" r="2.2" fill="#14f028"/><rect x="374.3" y="338.5" width="3.9" height="3.1" fill="#14f028"/><circle cx="383.2" cy="336.8" r="2.1" fill="#14f028"/><circle cx="368.7" cy="307.9" r="1.6" fill="#14f028"/><circle cx="376.5" cy="318.6" r="2.4" fill="#14f028"/><rect x="396.4" y="303.6" width="4.5" height="3.6" fill="#14f028"/><rect x="366.7" y="313.0" width="4.5" height="3.6" fill="#14f028"/><circle cx="399.9" cy="300.1" r="2.1" fill="#d01818"/><rect x="374.9" y="343.3" width="4.9" height="3.9" fill="#14f028"/><circle cx="400.0" cy="305.6" r="2.2" fill="#14f028"/><circle cx="375.3" cy="319.9" r="2.1" fill="#14f028"/><rect x="376.0" y="307.8" width="3.4" height="2.7" fill="#14f028"/><circle cx="374.5" cy="326.0" r="1.5" fill="#14f028"/><circle cx="385.0" cy="322.1" r="2.5" fill="#14f028"/><circle cx="395.1" cy="329.3" r="2.0" fill="#38ff5a"/><circle cx="379.7" cy="321.7" r="2.0" fill="#14f028"/><rect x="404.6" y="339.6" width="2.9" height="2.3" fill="#14f028"/><circle cx="394.9" cy="311.0" r="2.4" fill="#14f028"/><circle cx="400.1" cy="294.2" r="2.5" fill="#d01818"/><circle cx="398.4" cy="293.3" r="3.2" fill="#d01818"/><circle cx="396.4" cy="291.5" r="2.7" fill="#d01818"/><circle cx="399.1" cy="291.9" r="2.6" fill="#d01818"/><circle cx="397.7" cy="303.3" r="2.1" fill="#d01818"/><circle cx="401.0" cy="306.6" r="2.9" fill="#d01818"/><circle cx="401.2" cy="304.5" r="2.6" fill="#d01818"/><circle cx="403.7" cy="305.0" r="2.5" fill="#d01818"/><circle cx="400.8" cy="303.0" r="2.8" fill="#d01818"/><circle cx="401.8" cy="302.3" r="2.9" fill="#d01818"/><circle cx="417.2" cy="265.8" r="2.6" fill="#d01818"/><circle cx="418.7" cy="262.3" r="3.2" fill="#d01818"/><circle cx="416.2" cy="262.0" r="2.6" fill="#d01818"/><circle cx="413.4" cy="272.8" r="2.7" fill="#a01010"/><circle cx="415.1" cy="268.9" r="3.1" fill="#d01818"/><circle cx="413.8" cy="269.9" r="2.7" fill="#d01818"/><circle cx="441.8" cy="295.7" r="3.0" fill="#d01818"/><circle cx="438.9" cy="296.1" r="2.7" fill="#d01818"/><circle cx="438.9" cy="296.2" r="2.7" fill="#d01818"/><circle cx="441.3" cy="296.5" r="2.5" fill="#d01818"/><circle cx="417.9" cy="304.6" r="2.3" fill="#d01818"/><circle cx="423.4" cy="304.1" r="1.9" fill="#d01818"/><circle cx="421.1" cy="306.3" r="2.3" fill="#d01818"/><circle cx="420.5" cy="305.7" r="2.0" fill="#d01818"/><circle cx="399.0" cy="299.2" r="2.2" fill="#d01818"/><circle cx="403.5" cy="300.4" r="2.1" fill="#d01818"/><circle cx="408.2" cy="299.2" r="2.2" fill="#d01818"/><circle cx="398.4" cy="293.6" r="1.2" fill="#d01818"/><circle cx="410.0" cy="295.8" r="1.3" fill="#d01818"/><circle cx="409.5" cy="298.0" r="1.2" fill="#ffffff"/><circle cx="397.8" cy="294.9" r="1.3" fill="#d01818"/><circle cx="399.2" cy="298.4" r="1.4" fill="#d01818"/><circle cx="404.6" cy="295.8" r="1.9" fill="#d01818"/><circle cx="404.1" cy="295.9" r="1.2" fill="#d01818"/><rect x="386" y="252.500" width="4.200" height="16" fill="#c01414"/><circle cx="380.2" cy="284.5" r="2.200" fill="#2030c0"/><circle cx="392.6" cy="333.5" r="1.4" fill="#14f028"/><rect x="388.1" y="334.9" width="5.4" height="4.3" fill="#30e0e0"/><circle cx="377.3" cy="342.7" r="2.4" fill="#38ff5a"/><circle cx="371.3" cy="343.5" r="2.4" fill="#2a48f0"/><rect x="361.8" y="335.1" width="4.9" height="4.0" fill="#9a48e8"/><circle cx="416.7" cy="343.3" r="1.9" fill="#9a48e8"/><circle cx="390.1" cy="346.0" r="2.6" fill="#d01818"/><rect x="413.2" y="330.8" width="4.4" height="3.5" fill="#38ff5a"/><rect x="401.7" y="329.7" width="3.6" height="2.9" fill="#30e0e0"/><circle cx="392.1" cy="333.4" r="2.6" fill="#38ff5a"/><circle cx="369.3" cy="336.6" r="1.7" fill="#30e0e0"/><rect x="363.7" y="338.9" width="2.8" height="2.2" fill="#14f028"/><circle cx="394.1" cy="331.2" r="1.7" fill="#30e0e0"/><rect x="397.7" y="343.8" width="4.0" height="3.2" fill="#000000"/><circle cx="378.2" cy="335.6" r="2.0" fill="#30e0e0"/><circle cx="362.0" cy="344.1" r="1.7" fill="#d01818"/><circle cx="379.3" cy="333.3" r="2.2" fill="#30e0e0"/><circle cx="415.9" cy="331.0" r="1.5" fill="#14f028"/><circle cx="406.4" cy="342.3" r="2.6" fill="#30e0e0"/><rect x="357.7" y="340.2" width="3.4" height="2.8" fill="#14f028"/><rect x="384.5" y="330.3" width="5.1" height="4.1" fill="#30e0e0"/><circle cx="359.9" cy="342.1" r="2.6" fill="#30e0e0"/><rect x="387.7" y="343.3" width="5.5" height="4.4" fill="#30e0e0"/><circle cx="403.1" cy="341.4" r="1.4" fill="#30e0e0"/><rect x="367.3" y="339.1" width="4.2" height="3.4" fill="#30e0e0"/><circle cx="360.7" cy="340.9" r="2.8" fill="#30e0e0"/><circle cx="371.1" cy="338.2" r="2.5" fill="#30e0e0"/><circle cx="412.8" cy="338.7" r="2.1" fill="#38ff5a"/><rect x="376.8" y="330.1" width="3.2" height="2.6" fill="#30e0e0"/><rect x="377.9" y="339.2" width="4.0" height="3.2" fill="#2a48f0"/><circle cx="376.3" cy="346.0" r="1.4" fill="#14f028"/><circle cx="383.9" cy="332.4" r="2.6" fill="#14f028"/><circle cx="356.3" cy="342.2" r="2.0" fill="#14f028"/><circle cx="355.4" cy="346.8" r="1.6" fill="#14f028"/><rect x="392.5" y="336.5" width="5.0" height="4.0" fill="#9a48e8"/><circle cx="355.0" cy="340.9" r="1.8" fill="#30e0e0"/><circle cx="365.8" cy="341.6" r="2.7" fill="#14f028"/><circle cx="392.8" cy="335.8" r="2.7" fill="#30e0e0"/><circle cx="354.7" cy="339.1" r="2.2" fill="#14f028"/><rect x="407.2" y="333.0" width="3.7" height="3.0" fill="#30e0e0"/><circle cx="401.1" cy="343.7" r="2.0" fill="#14f028"/><rect x="398.5" y="337.1" width="3.1" height="2.5" fill="#14f028"/><circle cx="406.5" cy="338.9" r="1.9" fill="#30e0e0"/><circle cx="363.6" cy="347.5" r="1.6" fill="#30e0e0"/><circle cx="391.5" cy="341.0" r="2.3" fill="#2a48f0"/><circle cx="416.0" cy="337.3" r="1.9" fill="#30e0e0"/><circle cx="376.2" cy="341.7" r="1.9" fill="#38ff5a"/><circle cx="404.8" cy="342.2" r="1.9" fill="#2a48f0"/><circle cx="368.6" cy="335.7" r="2.5" fill="#14f028"/><circle cx="372.0" cy="336.8" r="1.6" fill="#14f028"/><rect x="408.4" y="329.5" width="4.9" height="3.9" fill="#14f028"/><rect x="408.2" y="335.0" width="3.4" height="2.7" fill="#30e0e0"/><circle cx="380.0" cy="335.0" r="1.4" fill="#30e0e0"/><rect x="403.4" y="334.6" width="3.1" height="2.5" fill="#14f028"/><circle cx="404.3" cy="340.9" r="2.0" fill="#14f028"/><circle cx="379.8" cy="336.4" r="1.9" fill="#d01818"/><rect x="406.8" y="338.3" width="5.1" height="4.0" fill="#14f028"/><rect x="386.8" y="330.2" width="3.9" height="3.2" fill="#14f028"/><circle cx="402.0" cy="341.6" r="2.5" fill="#30e0e0"/><circle cx="362.4" cy="339.5" r="2.1" fill="#38ff5a"/><rect x="394.9" y="338.2" width="5.1" height="4.1" fill="#2a48f0"/><circle cx="362.6" cy="347.3" r="2.0" fill="#14f028"/><circle cx="389.3" cy="335.0" r="1.9" fill="#2a48f0"/><rect x="386.7" y="330.5" width="3.0" height="2.4" fill="#9a48e8"/><circle cx="402.7" cy="340.6" r="2.0" fill="#30e0e0"/><rect x="363.1" y="336.4" width="4.7" height="3.8" fill="#14f028"/><rect x="358.9" y="331.8" width="4.4" height="3.5" fill="#30e0e0"/><circle cx="417.2" cy="345.0" r="1.6" fill="#38ff5a"/><rect x="400.2" y="343.4" width="3.4" height="2.7" fill="#000000"/><circle cx="362.9" cy="334.2" r="2.7" fill="#9a48e8"/><circle cx="360.4" cy="336.3" r="2.3" fill="#14f028"/><circle cx="403.2" cy="337.9" r="2.1" fill="#38ff5a"/><circle cx="382.0" cy="342.3" r="1.9" fill="#30e0e0"/><circle cx="377.5" cy="336.5" r="1.5" fill="#14f028"/><circle cx="414.2" cy="345.1" r="1.8" fill="#14f028"/><circle cx="372.5" cy="332.5" r="2.6" fill="#30e0e0"/><rect x="361.2" y="329.9" width="4.9" height="4.0" fill="#14f028"/><rect x="398.1" y="342.9" width="3.3" height="2.7" fill="#14f028"/><circle cx="402.7" cy="343.3" r="2.0" fill="#14f028"/><circle cx="383.1" cy="344.3" r="2.5" fill="#14f028"/><circle cx="413.9" cy="333.1" r="1.7" fill="#d01818"/><circle cx="360.0" cy="335.4" r="2.6" fill="#38ff5a"/><rect x="363.3" y="344.5" width="4.2" height="3.4" fill="#9a48e8"/><circle cx="370.9" cy="335.3" r="2.7" fill="#38ff5a"/><rect x="403.7" y="329.3" width="4.8" height="3.9" fill="#14f028"/><circle cx="355.4" cy="337.4" r="2.0" fill="#30e0e0"/><rect x="394.6" y="334.5" width="3.9" height="3.1" fill="#30e0e0"/><rect x="353.9" y="334.1" width="3.1" height="2.5" fill="#14f028"/><rect x="407.9" y="334.8" width="4.3" height="3.4" fill="#38ff5a"/><rect x="356.6" y="342.5" width="4.2" height="3.3" fill="#30e0e0"/><circle cx="401.6" cy="339.1" r="2.6" fill="#2a48f0"/><circle cx="399.9" cy="342.1" r="2.1" fill="#38ff5a"/><circle cx="386.7" cy="344.7" r="1.5" fill="#9a48e8"/><circle cx="392.7" cy="340.8" r="1.5" fill="#000000"/><rect x="374.6" y="345.3" width="4.4" height="3.5" fill="#14f028"/><circle cx="401.8" cy="338.8" r="1.8" fill="#30e0e0"/><rect x="398.6" y="344.4" width="3.6" height="2.9" fill="#2a48f0"/><circle cx="398.8" cy="343.2" r="2.7" fill="#14f028"/><rect x="371.6" y="329.7" width="5.4" height="4.3" fill="#9a48e8"/><rect x="379.9" y="333.7" width="3.1" height="2.5" fill="#30e0e0"/><circle cx="379.1" cy="338.5" r="2.2" fill="#38ff5a"/><circle cx="406.7" cy="334.1" r="2.0" fill="#14f028"/><rect x="390.2" y="334.8" width="3.7" height="2.9" fill="#d01818"/><rect x="355.4" y="331.7" width="5.2" height="4.1" fill="#30e0e0"/><rect x="365.0" y="332.2" width="5.3" height="4.3" fill="#2a48f0"/><circle cx="358.8" cy="347.4" r="2.4" fill="#d01818"/><circle cx="401.3" cy="343.8" r="1.8" fill="#30e0e0"/><circle cx="395.7" cy="335.8" r="1.6" fill="#30e0e0"/><circle cx="366.0" cy="334.1" r="2.7" fill="#000000"/><rect x="405.3" y="343.5" width="4.4" height="3.5" fill="#2a48f0"/><circle cx="408.6" cy="344.5" r="2.2" fill="#2a48f0"/><circle cx="381.3" cy="366.6" r="2.1" fill="#30e0e0"/><circle cx="394.8" cy="345.4" r="2.2" fill="#ffffff"/><circle cx="382.4" cy="350.2" r="2.1" fill="#d01818"/><circle cx="377.8" cy="351.6" r="1.4" fill="#9a48e8"/><circle cx="397.4" cy="343.7" r="2.0" fill="#ffffff"/><circle cx="393.0" cy="355.4" r="1.2" fill="#f428ec"/><circle cx="392.4" cy="371.3" r="2.3" fill="#000000"/><circle cx="393.0" cy="365.3" r="2.0" fill="#ffffff"/><circle cx="393.7" cy="377.5" r="2.4" fill="#30e0e0"/><circle cx="412.8" cy="356.9" r="1.6" fill="#2a48f0"/><circle cx="369.2" cy="367.2" r="1.6" fill="#2a48f0"/><rect x="356.4" y="362.1" width="4.6" height="3.7" fill="#d01818"/><circle cx="387.2" cy="350.9" r="1.6" fill="#2a48f0"/><circle cx="370.4" cy="360.1" r="1.5" fill="#d01818"/><circle cx="354.6" cy="355.2" r="2.3" fill="#f428ec"/><rect x="396.8" y="362.1" width="4.4" height="3.5" fill="#ffffff"/><circle cx="359.1" cy="369.2" r="2.6" fill="#14f028"/><rect x="359.0" y="361.2" width="4.0" height="3.2" fill="#30e0e0"/><rect x="375.4" y="344.3" width="3.0" height="2.4" fill="#30e0e0"/><circle cx="371.2" cy="364.2" r="2.1" fill="#f428ec"/><circle cx="414.5" cy="351.9" r="1.2" fill="#14f028"/><circle cx="355.3" cy="346.5" r="1.3" fill="#000000"/><circle cx="405.5" cy="345.1" r="2.3" fill="#ffffff"/><circle cx="399.0" cy="344.4" r="2.5" fill="#d01818"/><circle cx="358.2" cy="368.2" r="1.6" fill="#30e0e0"/><rect x="389.0" y="356.3" width="3.0" height="2.4" fill="#d01818"/><rect x="410.6" y="353.9" width="3.3" height="2.6" fill="#14f028"/><circle cx="391.2" cy="345.2" r="1.2" fill="#2a48f0"/><rect x="392.1" y="375.3" width="2.9" height="2.3" fill="#f428ec"/><rect x="382.0" y="355.7" width="5.1" height="4.0" fill="#f428ec"/><circle cx="407.9" cy="361.6" r="1.1" fill="#2a48f0"/><circle cx="411.2" cy="344.8" r="1.4" fill="#30e0e0"/><circle cx="367.1" cy="348.5" r="2.5" fill="#000000"/><rect x="385.4" y="342.8" width="4.9" height="3.9" fill="#f428ec"/><rect x="369.0" y="343.2" width="3.3" height="2.6" fill="#ffffff"/><circle cx="374.9" cy="350.1" r="2.0" fill="#d01818"/><circle cx="356.8" cy="361.7" r="1.8" fill="#2a48f0"/><circle cx="368.4" cy="371.8" r="1.7" fill="#f428ec"/><rect x="385.4" y="366.3" width="4.3" height="3.4" fill="#000000"/><rect x="362.0" y="358.3" width="3.9" height="3.1" fill="#f428ec"/><circle cx="398.6" cy="357.6" r="1.3" fill="#2a48f0"/><rect x="360.5" y="367.3" width="2.8" height="2.3" fill="#000000"/><circle cx="358.8" cy="345.9" r="2.0" fill="#14f028"/><circle cx="358.0" cy="365.5" r="1.3" fill="#2a48f0"/><rect x="393.7" y="370.0" width="2.6" height="2.1" fill="#14f028"/><circle cx="360.1" cy="360.2" r="2.4" fill="#2a48f0"/><circle cx="406.6" cy="360.1" r="2.4" fill="#ffffff"/><circle cx="406.4" cy="350.6" r="1.2" fill="#f428ec"/><circle cx="370.3" cy="358.1" r="2.6" fill="#ffffff"/><circle cx="369.0" cy="364.6" r="2.1" fill="#2a48f0"/><circle cx="385.4" cy="348.1" r="1.2" fill="#d01818"/><circle cx="355.6" cy="357.6" r="2.2" fill="#14f028"/><circle cx="382.0" cy="358.4" r="2.3" fill="#2a48f0"/><rect x="377.4" y="347.1" width="2.4" height="1.9" fill="#d01818"/><circle cx="355.6" cy="357.9" r="2.3" fill="#2a48f0"/><circle cx="410.7" cy="362.4" r="1.5" fill="#2a48f0"/><rect x="389.8" y="364.7" width="2.3" height="1.9" fill="#30e0e0"/><rect x="378.2" y="371.0" width="4.0" height="3.2" fill="#000000"/><rect x="350.8" y="360.6" width="5.0" height="4.0" fill="#f428ec"/><rect x="409.0" y="346.8" width="3.9" height="3.1" fill="#2a48f0"/><circle cx="393.0" cy="374.9" r="1.5" fill="#14f028"/><circle cx="370.3" cy="369.6" r="2.4" fill="#f428ec"/><rect x="410.5" y="353.5" width="3.9" height="3.2" fill="#000000"/><circle cx="395.3" cy="353.9" r="1.2" fill="#2a48f0"/><circle cx="366.9" cy="346.5" r="1.3" fill="#14f028"/><circle cx="369.1" cy="355.7" r="2.3" fill="#000000"/><rect x="388.8" y="352.8" width="3.9" height="3.1" fill="#f428ec"/><rect x="393.5" y="372.1" width="2.9" height="2.3" fill="#30e0e0"/><circle cx="375.7" cy="358.2" r="1.9" fill="#14f028"/><circle cx="392.4" cy="362.4" r="1.9" fill="#30e0e0"/><circle cx="366.5" cy="347.3" r="2.4" fill="#d01818"/><rect x="368.7" y="361.7" width="3.6" height="2.8" fill="#d01818"/><rect x="403.7" y="344.8" width="3.0" height="2.4" fill="#9a48e8"/><circle cx="363.5" cy="345.8" r="1.4" fill="#d01818"/><rect x="390.0" y="363.2" width="4.0" height="3.2" fill="#d01818"/><circle cx="382.5" cy="367.1" r="2.2" fill="#9a48e8"/><circle cx="388.4" cy="369.9" r="1.7" fill="#f428ec"/><circle cx="401.4" cy="368.2" r="2.5" fill="#9a48e8"/><circle cx="393.5" cy="356.5" r="1.1" fill="#2a48f0"/><circle cx="400.3" cy="364.6" r="1.8" fill="#14f028"/><circle cx="392.3" cy="365.2" r="2.1" fill="#d01818"/><circle cx="356.3" cy="366.6" r="1.7" fill="#30e0e0"/><rect x="382.0" y="347.5" width="3.3" height="2.6" fill="#d01818"/><circle cx="412.2" cy="349.2" r="1.4" fill="#30e0e0"/><circle cx="410.1" cy="343.2" r="2.5" fill="#000000"/><circle cx="394.6" cy="359.1" r="1.6" fill="#2a48f0"/><circle cx="410.9" cy="347.0" r="1.8" fill="#d01818"/><circle cx="405.5" cy="364.0" r="2.5" fill="#f428ec"/><circle cx="369.0" cy="362.2" r="1.2" fill="#ffffff"/><circle cx="384.1" cy="353.1" r="1.4" fill="#2a48f0"/><circle cx="379.5" cy="364.0" r="2.0" fill="#f428ec"/><circle cx="388.2" cy="354.7" r="2.2" fill="#f428ec"/><circle cx="397.9" cy="352.0" r="1.5" fill="#ffffff"/><circle cx="380.7" cy="357.0" r="1.9" fill="#30e0e0"/><circle cx="389.2" cy="376.2" r="1.2" fill="#14f028"/><circle cx="407.3" cy="352.6" r="1.4" fill="#2a48f0"/><rect x="407.9" y="342.8" width="2.2" height="1.8" fill="#2a48f0"/><circle cx="372.1" cy="360.2" r="2.1" fill="#000000"/><circle cx="391.4" cy="374.9" r="1.5" fill="#30e0e0"/><rect x="381.8" y="345.4" width="3.6" height="2.9" fill="#ffffff"/><rect x="382.4" y="369.6" width="4.0" height="3.2" fill="#f428ec"/><rect x="364.8" y="347.9" width="4.3" height="3.4" fill="#d01818"/><rect x="395.6" y="361.4" width="5.2" height="4.1" fill="#14f028"/><rect x="383.6" y="347.6" width="4.1" height="3.3" fill="#2a48f0"/><rect x="351.0" y="344.8" width="2.8" height="2.2" fill="#d01818"/><circle cx="403.7" cy="358.6" r="2.1" fill="#2a48f0"/><circle cx="393.5" cy="358.6" r="2.2" fill="#d01818"/><rect x="403.7" y="350.7" width="2.5" height="2.0" fill="#14f028"/><circle cx="385.5" cy="349.5" r="1.5" fill="#d01818"/><circle cx="380.3" cy="371.5" r="1.8" fill="#000000"/><circle cx="384.5" cy="357.0" r="2.1" fill="#2a48f0"/><circle cx="398.1" cy="354.1" r="1.6" fill="#d01818"/><rect x="381.5" y="359.2" width="4.4" height="3.5" fill="#2a48f0"/><circle cx="378.2" cy="351.7" r="1.7" fill="#30e0e0"/><circle cx="379.8" cy="370.4" r="1.3" fill="#d01818"/><circle cx="367.7" cy="353.4" r="1.8" fill="#000000"/><rect x="359.5" y="363.9" width="2.9" height="2.3" fill="#2a48f0"/><circle cx="417.5" cy="355.9" r="2.2" fill="#2a48f0"/><rect x="352.5" y="349.4" width="4.5" height="3.6" fill="#14f028"/><rect x="383.7" y="369.5" width="3.8" height="3.0" fill="#30e0e0"/><circle cx="354.8" cy="349.6" r="2.0" fill="#d01818"/><circle cx="394.5" cy="362.7" r="1.7" fill="#30e0e0"/><circle cx="387.2" cy="373.8" r="2.3" fill="#e8e030"/><circle cx="398.3" cy="362.3" r="1.3" fill="#f428ec"/><circle cx="367.4" cy="364.4" r="2.0" fill="#d01818"/><rect x="364.3" y="351.7" width="4.9" height="3.9" fill="#30e0e0"/><circle cx="372.0" cy="358.7" r="2.0" fill="#d01818"/><circle cx="381.4" cy="358.6" r="1.6" fill="#30e0e0"/><rect x="377.6" y="361.2" width="3.3" height="2.6" fill="#d01818"/><circle cx="369.5" cy="359.7" r="1.3" fill="#000000"/><circle cx="411.6" cy="345.4" r="2.5" fill="#f428ec"/><circle cx="362.5" cy="360.7" r="1.7" fill="#2a48f0"/><rect x="405.9" y="352.1" width="2.6" height="2.1" fill="#30e0e0"/><circle cx="354.1" cy="363.3" r="2.2" fill="#30e0e0"/><circle cx="389.8" cy="373.6" r="1.5" fill="#9a48e8"/><circle cx="392.0" cy="376.4" r="1.2" fill="#30e0e0"/><circle cx="382.7" cy="350.2" r="2.0" fill="#14f028"/><circle cx="388.6" cy="351.9" r="1.8" fill="#d01818"/><rect x="389.4" y="347.2" width="2.6" height="2.0" fill="#f428ec"/><circle cx="386.8" cy="368.8" r="2.5" fill="#f428ec"/><circle cx="396.1" cy="353.0" r="1.6" fill="#ffffff"/><circle cx="397.8" cy="349.2" r="1.3" fill="#14f028"/><circle cx="376.5" cy="354.7" r="1.3" fill="#f428ec"/><circle cx="374.8" cy="367.9" r="2.6" fill="#d01818"/><circle cx="399.4" cy="372.4" r="2.5" fill="#ffffff"/><circle cx="391.5" cy="345.4" r="1.6" fill="#f428ec"/><circle cx="355.2" cy="357.8" r="2.4" fill="#d01818"/><circle cx="360.3" cy="366.3" r="2.0" fill="#9a48e8"/><rect x="367.4" y="352.6" width="3.2" height="2.6" fill="#000000"/><rect x="386.2" y="365.5" width="2.4" height="2.0" fill="#000000"/><rect x="398.5" y="358.6" width="4.2" height="3.4" fill="#30e0e0"/><rect x="352.1" y="348.1" width="2.7" height="2.2" fill="#f428ec"/><circle cx="386.7" cy="369.5" r="1.2" fill="#2a48f0"/><circle cx="355.6" cy="347.9" r="1.5" fill="#d01818"/><circle cx="385.4" cy="361.3" r="1.1" fill="#f428ec"/><circle cx="377.3" cy="371.9" r="1.7" fill="#2a48f0"/><circle cx="360.8" cy="345.6" r="2.5" fill="#000000"/><rect x="386.3" y="367.2" width="3.6" height="2.9" fill="#30e0e0"/><rect x="393.8" y="357.6" width="2.3" height="1.9" fill="#30e0e0"/><rect x="381.7" y="351.5" width="3.8" height="3.0" fill="#14f028"/><rect x="386.0" y="374.2" width="4.2" height="3.4" fill="#d01818"/><rect x="378.5" y="362.7" width="4.2" height="3.3" fill="#f428ec"/><circle cx="395.8" cy="350.3" r="1.7" fill="#d01818"/><circle cx="353.9" cy="351.5" r="1.3" fill="#30e0e0"/><circle cx="401.4" cy="370.0" r="1.7" fill="#000000"/><circle cx="402.8" cy="343.9" r="1.5" fill="#d01818"/><circle cx="385.5" cy="367.2" r="2.1" fill="#2a48f0"/><rect x="391.4" y="358.8" width="3.4" height="2.7" fill="#d01818"/><circle cx="363.8" cy="370.8" r="1.2" fill="#d01818"/><rect x="361.4" y="359.7" width="2.7" height="2.2" fill="#d01818"/><circle cx="363.0" cy="348.9" r="2.1" fill="#2a48f0"/><circle cx="379.6" cy="359.0" r="2.1" fill="#000000"/><circle cx="402.3" cy="368.9" r="1.2" fill="#f428ec"/><rect x="400.1" y="362.2" width="4.4" height="3.5" fill="#2a48f0"/><circle cx="405.8" cy="364.8" r="1.2" fill="#30e0e0"/><circle cx="401.3" cy="346.9" r="1.7" fill="#2a48f0"/><circle cx="394.1" cy="351.0" r="2.4" fill="#2a48f0"/><rect x="398.0" y="349.3" width="2.2" height="1.8" fill="#14f028"/><rect x="350.2" y="346.8" width="4.5" height="3.6" fill="#14f028"/><circle cx="389.6" cy="346.0" r="2.1" fill="#14f028"/><circle cx="403.2" cy="360.6" r="1.8" fill="#000000"/><rect x="392.1" y="368.6" width="5.0" height="4.0" fill="#30e0e0"/><circle cx="392.1" cy="364.7" r="1.9" fill="#000000"/><rect x="401.4" y="347.5" width="3.5" height="2.8" fill="#30e0e0"/><rect x="367.3" y="354.2" width="3.9" height="3.1" fill="#14f028"/><rect x="403.2" y="343.8" width="3.6" height="2.9" fill="#f428ec"/><rect x="405.9" y="348.7" width="3.6" height="2.8" fill="#2a48f0"/><circle cx="392.3" cy="362.0" r="1.9" fill="#2a48f0"/><circle cx="371.3" cy="350.8" r="1.8" fill="#2a48f0"/><rect x="389.0" y="365.0" width="4.0" height="3.2" fill="#f428ec"/><circle cx="402.2" cy="350.1" r="2.2" fill="#30e0e0"/><circle cx="387.2" cy="374.9" r="2.3" fill="#e8e030"/><rect x="367.3" y="363.8" width="2.7" height="2.2" fill="#2a48f0"/><circle cx="395.6" cy="356.6" r="2.3" fill="#ffffff"/><circle cx="373.8" cy="354.2" r="1.3" fill="#2a48f0"/><circle cx="404.2" cy="358.9" r="1.2" fill="#000000"/><circle cx="395.3" cy="343.9" r="1.6" fill="#ffffff"/><circle cx="355.5" cy="345.7" r="2.3" fill="#2a48f0"/><rect x="383.5" y="368.8" width="3.9" height="3.1" fill="#30e0e0"/><circle cx="360.0" cy="345.9" r="1.5" fill="#d01818"/><circle cx="358.4" cy="346.6" r="1.4" fill="#ffffff"/><circle cx="390.9" cy="357.0" r="1.3" fill="#f428ec"/><circle cx="376.0" cy="364.0" r="1.2" fill="#14f028"/><circle cx="393.5" cy="349.9" r="1.1" fill="#d01818"/><rect x="353.0" y="346.3" width="3.8" height="3.1" fill="#d01818"/><circle cx="390.8" cy="353.9" r="1.2" fill="#30e0e0"/><rect x="379.4" y="347.4" width="4.1" height="3.3" fill="#f428ec"/><circle cx="413.9" cy="350.7" r="1.2" fill="#f428ec"/><circle cx="417.3" cy="349.5" r="1.9" fill="#9a48e8"/><rect x="358.6" y="349.5" width="2.9" height="2.3" fill="#30e0e0"/><rect x="396.2" y="371.5" width="4.8" height="3.8" fill="#14f028"/><circle cx="371.7" cy="364.0" r="2.0" fill="#30e0e0"/><circle cx="366.4" cy="351.3" r="1.2" fill="#2a48f0"/><rect x="415.1" y="346.5" width="4.1" height="3.3" fill="#000000"/><rect x="375.6" y="354.7" width="2.4" height="1.9" fill="#f428ec"/><circle cx="351.2" cy="358.7" r="1.4" fill="#d01818"/><circle cx="412.0" cy="360.5" r="1.6" fill="#14f028"/><rect x="402.8" y="354.0" width="3.3" height="2.6" fill="#14f028"/><circle cx="379.3" cy="347.0" r="1.5" fill="#30e0e0"/><circle cx="406.6" cy="363.9" r="2.2" fill="#ffffff"/><circle cx="401.9" cy="367.2" r="2.0" fill="#ffffff"/><rect x="386.9" y="360.4" width="3.1" height="2.5" fill="#000000"/><rect x="383.0" y="352.3" width="4.1" height="3.3" fill="#30e0e0"/><circle cx="364.6" cy="364.7" r="2.1" fill="#f428ec"/><circle cx="357.8" cy="367.1" r="1.2" fill="#000000"/><circle cx="392.9" cy="364.4" r="1.9" fill="#d01818"/><circle cx="411.0" cy="358.2" r="2.1" fill="#14f028"/><rect x="362.4" y="349.1" width="5.0" height="4.0" fill="#14f028"/><circle cx="384.0" cy="374.1" r="2.0" fill="#30e0e0"/><circle cx="414.7" cy="346.2" r="1.5" fill="#000000"/><circle cx="402.7" cy="353.3" r="2.5" fill="#f428ec"/><rect x="391.7" y="367.1" width="4.4" height="3.5" fill="#000000"/><rect x="355.1" y="347.5" width="3.9" height="3.1" fill="#f428ec"/><rect x="358.1" y="344.2" width="4.6" height="3.7" fill="#30e0e0"/><circle cx="375.3" cy="361.7" r="1.1" fill="#14f028"/><rect x="372.8" y="359.3" width="2.4" height="1.9" fill="#000000"/><circle cx="394.8" cy="376.3" r="1.4" fill="#2a48f0"/><rect x="404.1" y="361.8" width="2.4" height="1.9" fill="#30e0e0"/><rect x="389.8" y="367.4" width="2.5" height="2.0" fill="#2a48f0"/><circle cx="357.9" cy="360.7" r="1.7" fill="#f428ec"/><circle cx="360.9" cy="365.6" r="2.9" fill="#9a48e8"/><circle cx="354.1" cy="362.9" r="2.8" fill="#f428ec"/><circle cx="360.3" cy="362.9" r="2.9" fill="#d01818"/><circle cx="354.3" cy="361.5" r="2.4" fill="#f428ec"/><circle cx="355.4" cy="363.6" r="1.6" fill="#f428ec"/><circle cx="356.0" cy="362.2" r="2.7" fill="#f428ec"/><circle cx="361.8" cy="358.9" r="1.8" fill="#f428ec"/><circle cx="359.4" cy="358.7" r="2.2" fill="#f428ec"/><circle cx="359.6" cy="363.2" r="2.1" fill="#d01818"/><circle cx="357.1" cy="359.7" r="2.1" fill="#9a48e8"/><circle cx="355.3" cy="359.5" r="2.8" fill="#f428ec"/><circle cx="358.2" cy="364.5" r="2.4" fill="#f428ec"/><circle cx="355.8" cy="361.3" r="1.7" fill="#9a48e8"/><circle cx="358.4" cy="360.0" r="2.1" fill="#f428ec"/><circle cx="355.1" cy="362.6" r="1.9" fill="#f428ec"/><circle cx="355.9" cy="359.4" r="2.6" fill="#9a48e8"/><circle cx="354.9" cy="360.5" r="2.8" fill="#f428ec"/><circle cx="363.3" cy="364.9" r="1.6" fill="#f428ec"/><circle cx="356.9" cy="361.4" r="2.1" fill="#f428ec"/><circle cx="355.2" cy="360.5" r="2.8" fill="#f428ec"/><circle cx="354.0" cy="361.5" r="1.9" fill="#f428ec"/><circle cx="374.8" cy="350.8" r="3.2" fill="#14f028"/><circle cx="373.6" cy="349.8" r="2.7" fill="#14f028"/><circle cx="371.8" cy="354.9" r="3.0" fill="#14f028"/><circle cx="373.4" cy="348.3" r="3.2" fill="#14f028"/><circle cx="375.5" cy="353.9" r="2.0" fill="#14f028"/><circle cx="377.2" cy="350.4" r="2.6" fill="#14f028"/><circle cx="371.9" cy="352.2" r="3.0" fill="#14f028"/><circle cx="370.7" cy="354.8" r="2.4" fill="#14f028"/><circle cx="369.9" cy="348.4" r="2.0" fill="#14f028"/><circle cx="371.8" cy="348.5" r="2.9" fill="#14f028"/><circle cx="393.9" cy="349.6" r="2.5" fill="#14f028"/><circle cx="392.3" cy="351.3" r="2.7" fill="#14f028"/><circle cx="393.6" cy="353.5" r="2.9" fill="#14f028"/><circle cx="396.4" cy="350.0" r="2.9" fill="#14f028"/><circle cx="400.6" cy="351.1" r="2.7" fill="#14f028"/><circle cx="396.7" cy="351.3" r="2.8" fill="#14f028"/><circle cx="391.7" cy="352.4" r="2.1" fill="#14f028"/><circle cx="448.9" cy="367.8" r="1.7" fill="#f428ec"/><circle cx="411.1" cy="368.0" r="1.7" fill="#d01818"/><rect x="439.1" y="369.6" width="3.3" height="2.6" fill="#f428ec"/><circle cx="433.4" cy="368.6" r="2.3" fill="#000000"/><circle cx="459.7" cy="368.2" r="1.2" fill="#d01818"/><rect x="431.3" y="355.6" width="3.2" height="2.5" fill="#2a48f0"/><circle cx="410.5" cy="364.7" r="2.3" fill="#f428ec"/><circle cx="429.6" cy="357.8" r="2.0" fill="#f428ec"/><rect x="430.9" y="362.3" width="4.6" height="3.6" fill="#f428ec"/><circle cx="418.7" cy="369.3" r="1.5" fill="#f428ec"/><circle cx="422.3" cy="368.7" r="1.8" fill="#f428ec"/><rect x="423.0" y="366.6" width="3.8" height="3.1" fill="#f428ec"/><rect x="421.8" y="363.7" width="3.4" height="2.7" fill="#9a48e8"/><circle cx="435.7" cy="370.6" r="1.4" fill="#f428ec"/><circle cx="410.1" cy="366.2" r="2.1" fill="#ffffff"/><circle cx="454.1" cy="370.3" r="1.6" fill="#f428ec"/><rect x="456.3" y="365.3" width="3.1" height="2.5" fill="#d01818"/><circle cx="424.1" cy="359.2" r="2.0" fill="#d01818"/><rect x="424.2" y="369.7" width="4.3" height="3.4" fill="#f428ec"/><circle cx="425.5" cy="369.4" r="2.0" fill="#f428ec"/><circle cx="426.6" cy="360.0" r="1.9" fill="#000000"/><rect x="431.1" y="365.1" width="2.9" height="2.3" fill="#f428ec"/><circle cx="418.5" cy="367.5" r="1.3" fill="#f428ec"/><rect x="458.4" y="367.4" width="4.1" height="3.3" fill="#d01818"/><rect x="433.3" y="354.6" width="2.5" height="2.0" fill="#f428ec"/><circle cx="432.1" cy="358.9" r="1.3" fill="#f428ec"/><rect x="412.4" y="357.7" width="2.2" height="1.8" fill="#ffffff"/><rect x="439.5" y="370.6" width="4.4" height="3.5" fill="#2a48f0"/><circle cx="446.3" cy="371.9" r="2.4" fill="#2a48f0"/><circle cx="449.3" cy="367.6" r="1.8" fill="#f428ec"/><circle cx="437.4" cy="355.5" r="2.2" fill="#f428ec"/><circle cx="432.5" cy="371.8" r="1.4" fill="#d01818"/><rect x="456.4" y="361.9" width="2.2" height="1.8" fill="#ffffff"/><circle cx="422.7" cy="358.9" r="2.1" fill="#d01818"/><circle cx="421.8" cy="362.2" r="2.1" fill="#ffffff"/><circle cx="454.0" cy="364.5" r="2.2" fill="#d01818"/><rect x="442.1" y="369.3" width="2.6" height="2.1" fill="#ffffff"/><circle cx="444.9" cy="369.7" r="2.2" fill="#f428ec"/><rect x="413.1" y="356.3" width="3.8" height="3.1" fill="#d01818"/><circle cx="412.6" cy="367.6" r="2.3" fill="#9a48e8"/><circle cx="428.7" cy="359.2" r="1.5" fill="#ffffff"/><circle cx="407.9" cy="371.0" r="2.0" fill="#f428ec"/><circle cx="423.7" cy="365.6" r="1.2" fill="#f428ec"/><rect x="431.8" y="368.4" width="2.6" height="2.1" fill="#f428ec"/><circle cx="407.2" cy="361.8" r="2.2" fill="#f428ec"/><circle cx="419.2" cy="368.4" r="2.1" fill="#f428ec"/><circle cx="409.9" cy="363.5" r="1.7" fill="#f428ec"/><circle cx="444.0" cy="362.2" r="2.2" fill="#f428ec"/><circle cx="416.6" cy="357.5" r="2.3" fill="#f428ec"/><circle cx="444.4" cy="361.6" r="1.8" fill="#d01818"/><rect x="431.7" y="364.9" width="3.8" height="3.1" fill="#d01818"/><rect x="435.2" y="361.0" width="4.2" height="3.4" fill="#d01818"/><circle cx="426.3" cy="359.6" r="1.7" fill="#2a48f0"/><rect x="457.3" y="367.7" width="3.5" height="2.8" fill="#ffffff"/><circle cx="426.5" cy="356.5" r="1.7" fill="#f428ec"/><circle cx="459.8" cy="364.6" r="1.3" fill="#f428ec"/><circle cx="434.4" cy="362.4" r="1.6" fill="#f428ec"/><circle cx="438.6" cy="355.9" r="1.4" fill="#f428ec"/><circle cx="431.5" cy="368.7" r="2.1" fill="#2a48f0"/><circle cx="433.9" cy="357.0" r="1.4" fill="#d01818"/><circle cx="438.1" cy="359.8" r="1.8" fill="#ffffff"/><circle cx="407.2" cy="363.4" r="1.8" fill="#f428ec"/><circle cx="438.5" cy="371.9" r="1.6" fill="#f428ec"/><rect x="435.1" y="358.7" width="2.8" height="2.2" fill="#2a48f0"/><circle cx="435.6" cy="371.4" r="2.2" fill="#ffffff"/><circle cx="434.1" cy="360.2" r="1.7" fill="#f428ec"/><circle cx="436.5" cy="372.7" r="1.8" fill="#ffffff"/><circle cx="429.0" cy="371.3" r="1.3" fill="#ffffff"/><circle cx="443.2" cy="361.5" r="1.6" fill="#d01818"/><circle cx="433.8" cy="366.4" r="2.3" fill="#2a48f0"/><circle cx="427.3" cy="367.9" r="1.2" fill="#d01818"/><rect x="419.9" y="365.5" width="3.0" height="2.4" fill="#f428ec"/><circle cx="421.4" cy="365.2" r="1.9" fill="#ffffff"/><rect x="445.9" y="360.5" width="3.9" height="3.1" fill="#f428ec"/><circle cx="447.4" cy="371.6" r="1.2" fill="#ffffff"/><rect x="416.8" y="356.1" width="3.1" height="2.5" fill="#9a48e8"/><circle cx="439.4" cy="364.7" r="1.8" fill="#f428ec"/><circle cx="448.8" cy="368.0" r="2.2" fill="#d01818"/><circle cx="441.2" cy="357.0" r="1.7" fill="#f428ec"/><circle cx="418.9" cy="372.3" r="1.7" fill="#f428ec"/><rect x="418.3" y="365.2" width="3.1" height="2.5" fill="#f428ec"/><circle cx="456.4" cy="363.0" r="1.4" fill="#9a48e8"/><rect x="410.0" y="366.1" width="3.6" height="2.9" fill="#f428ec"/><rect x="457.2" y="362.0" width="2.3" height="1.8" fill="#ffffff"/><circle cx="408.1" cy="359.7" r="1.8" fill="#f428ec"/><circle cx="422.8" cy="363.5" r="1.3" fill="#f428ec"/><rect x="436.0" y="364.0" width="3.4" height="2.7" fill="#d01818"/><circle cx="422.7" cy="362.5" r="1.4" fill="#f428ec"/><circle cx="422.6" cy="364.8" r="1.3" fill="#9a48e8"/><circle cx="413.3" cy="364.8" r="2.2" fill="#d01818"/><circle cx="412.2" cy="363.3" r="1.6" fill="#d01818"/><circle cx="433.2" cy="370.7" r="1.6" fill="#f428ec"/><circle cx="452.1" cy="363.9" r="2.1" fill="#ffffff"/><circle cx="445.0" cy="364.3" r="2.3" fill="#f428ec"/><circle cx="433.5" cy="360.4" r="1.6" fill="#f428ec"/><rect x="428.4" y="367.5" width="2.9" height="2.3" fill="#d01818"/><circle cx="419.1" cy="360.9" r="1.8" fill="#f428ec"/><rect x="420.3" y="362.8" width="3.9" height="3.1" fill="#f428ec"/><rect x="436.3" y="363.7" width="4.8" height="3.8" fill="#f428ec"/><circle cx="419.2" cy="368.3" r="1.6" fill="#d01818"/><circle cx="415.0" cy="359.1" r="1.8" fill="#9a48e8"/><circle cx="423.0" cy="371.2" r="2.0" fill="#d01818"/><rect x="416.5" y="364.2" width="2.2" height="1.8" fill="#2a48f0"/><rect x="421.0" y="358.0" width="3.9" height="3.1" fill="#d01818"/><circle cx="444.8" cy="370.8" r="1.1" fill="#f428ec"/><circle cx="454.5" cy="364.9" r="1.6" fill="#f428ec"/><circle cx="456.2" cy="365.8" r="1.7" fill="#d01818"/><circle cx="448.3" cy="364.2" r="1.5" fill="#f428ec"/><circle cx="441.2" cy="356.3" r="1.7" fill="#f428ec"/><rect x="419.4" y="369.5" width="4.4" height="3.5" fill="#f428ec"/><circle cx="454.8" cy="364.8" r="1.7" fill="#9a48e8"/><rect x="435.2" y="363.3" width="3.4" height="2.7" fill="#f428ec"/><rect x="428.9" y="358.5" width="3.1" height="2.5" fill="#f428ec"/><rect x="441.0" y="355.5" width="3.0" height="2.4" fill="#2a48f0"/><circle cx="436.2" cy="360.3" r="1.5" fill="#d01818"/><circle cx="454.5" cy="367.4" r="1.9" fill="#f428ec"/><circle cx="434.0" cy="359.9" r="1.9" fill="#9a48e8"/><circle cx="420.1" cy="365.3" r="2.2" fill="#9a48e8"/><circle cx="428.5" cy="362.3" r="1.9" fill="#2a48f0"/><rect x="446.8" y="364.3" width="3.9" height="3.1" fill="#f428ec"/><circle cx="445.6" cy="369.8" r="2.4" fill="#d01818"/><circle cx="411.9" cy="360.8" r="1.2" fill="#2a48f0"/><circle cx="417.5" cy="368.2" r="1.1" fill="#d01818"/><circle cx="416.4" cy="370.5" r="1.1" fill="#f428ec"/><rect x="452.5" y="366.1" width="4.6" height="3.7" fill="#f428ec"/><rect x="440.5" y="367.7" width="2.5" height="2.0" fill="#9a48e8"/><circle cx="446.2" cy="357.2" r="2.3" fill="#f428ec"/><circle cx="414.4" cy="366.7" r="2.1" fill="#f428ec"/><circle cx="451.6" cy="369.9" r="1.8" fill="#f428ec"/><rect x="410.9" y="369.9" width="3.8" height="3.0" fill="#f428ec"/><circle cx="443.6" cy="357.4" r="1.7" fill="#d01818"/><circle cx="418.0" cy="357.7" r="1.9" fill="#ffffff"/><circle cx="446.7" cy="362.2" r="1.5" fill="#9a48e8"/><rect x="428.1" y="367.8" width="3.2" height="2.6" fill="#f428ec"/><circle cx="408.1" cy="358.9" r="1.7" fill="#f428ec"/><circle cx="451.7" cy="361.4" r="1.9" fill="#f428ec"/><circle cx="443.4" cy="368.0" r="1.4" fill="#000000"/><circle cx="424.8" cy="364.3" r="1.6" fill="#f428ec"/><circle cx="419.8" cy="362.6" r="1.7" fill="#2a48f0"/><circle cx="435.4" cy="361.3" r="1.9" fill="#d01818"/><circle cx="452.7" cy="368.0" r="1.7" fill="#d01818"/><circle cx="408.4" cy="367.1" r="1.6" fill="#ffffff"/><rect x="442.5" y="362.6" width="3.5" height="2.8" fill="#d01818"/><circle cx="434.8" cy="368.6" r="1.7" fill="#f428ec"/><rect x="423.5" y="360.1" width="3.7" height="3.0" fill="#d01818"/><circle cx="414.6" cy="362.6" r="2.4" fill="#ffffff"/><rect x="443.0" y="366.3" width="2.6" height="2.1" fill="#2a48f0"/><rect x="432.8" y="360.7" width="3.8" height="3.1" fill="#2a48f0"/><circle cx="409.5" cy="363.5" r="1.7" fill="#9a48e8"/><rect x="407.9" y="360.3" width="3.0" height="2.4" fill="#ffffff"/><path d="M437.0 359.0 441.0 356.5 446.0 358.0 450.0 362.0 455.0 363.5" stroke="#d01818" stroke-width="2.00"/><path d="M422.0 369.0 440.0 371.0 456.0 369.5" stroke="#f428ec" stroke-width="1.40"/><circle cx="402.2" cy="378.9" r="1.5" fill="#2a48f0"/><circle cx="400.3" cy="375.4" r="1.3" fill="#000000"/><circle cx="400.9" cy="378.3" r="1.8" fill="#2a48f0"/><circle cx="396.0" cy="384.7" r="1.8" fill="#2a48f0"/><circle cx="397.9" cy="374.6" r="1.4" fill="#2a48f0"/><circle cx="401.2" cy="383.3" r="1.3" fill="#000000"/><circle cx="395.6" cy="378.5" r="1.3" fill="#2a48f0"/><circle cx="398.9" cy="375.6" r="1.4" fill="#2a48f0"/><circle cx="398.1" cy="385.3" r="1.6" fill="#d01818"/><circle cx="395.4" cy="381.6" r="1.9" fill="#30e0e0"/><circle cx="398.6" cy="382.7" r="2.1" fill="#2a48f0"/><circle cx="400.9" cy="383.6" r="2.1" fill="#d01818"/><circle cx="398.2" cy="385.4" r="2.1" fill="#d01818"/><circle cx="396.7" cy="380.2" r="1.7" fill="#d01818"/><circle cx="401.9" cy="384.2" r="1.9" fill="#2a48f0"/><circle cx="398.8" cy="378.9" r="2.1" fill="#2a48f0"/><circle cx="403.8" cy="361.3" r="1.8" fill="#2a48f0"/><circle cx="401.8" cy="362.5" r="1.8" fill="#2a48f0"/><circle cx="405.3" cy="363.2" r="1.9" fill="#2a48f0"/><circle cx="477.3" cy="330.5" r="1.8" fill="#2a48f0"/><circle cx="480.2" cy="330.9" r="1.9" fill="#2a48f0"/><circle cx="478.2" cy="330.6" r="1.5" fill="#2a48f0"/><circle cx="475.9" cy="330.4" r="1.7" fill="#2a48f0"/></svg>
<div class="a" style="left:28px;top:556px;width:627px;height:15px;background:#ececec"></div>
<div class="a" style="left:0;top:576px;width:678px;height:20px;background:#f4f5f8"></div>
<div class="a" style="left:0;top:571px;width:654px;height:5px;background:#f4f5f8"></div>
<div class="a" style="left:1px;top:571px;width:653px;height:5px;background:#fbfbfd"></div>
<div class="a" style="left:0;top:576px;width:678px;height:1px;background:#3c3e44"></div>
<div class="a" style="left:0;top:577px;width:678px;height:1px;background:#7c7f86"></div>
<div class="a" style="left:28.5px;top:556.500px;width:17.500px;height:13px;background:#f2f2f2;border:1px solid #fff;border-right-color:#8c8c8c;border-bottom-color:#8c8c8c"></div>
<div class="a" style="left:46px;top:556.500px;width:17.500px;height:13px;background:#f2f2f2;border:1px solid #fff;border-right-color:#8c8c8c;border-bottom-color:#8c8c8c"></div>
<div class="a" style="left:63.5px;top:556.500px;width:17.500px;height:13px;background:#f2f2f2;border:1px solid #fff;border-right-color:#8c8c8c;border-bottom-color:#8c8c8c"></div>
<div class="a" style="left:81px;top:556.500px;width:17.500px;height:13px;background:#f2f2f2;border:1px solid #fff;border-right-color:#8c8c8c;border-bottom-color:#8c8c8c"></div>
<svg class="a" style="left:28.500px;top:557px" width="72" height="13"><g fill="#000"><rect x="3.500" y="1.500" width="2.400" height="9.500"/><path d="M11.500 1.500v9.500l-5.600-4.750z"/><path d="M29 1.500v9.500l-6-4.750z"/><path d="M41.500 1.500v9.500l6-4.750z"/><path d="M57 1.500v9.500l5.600-4.750z"/><rect x="62.600" y="1.500" width="2.400" height="9.500"/></g></svg>
<svg class="a" style="left:100px;top:555px" width="100" height="17"><path d="M3 0l5 15h29l5-15z" fill="#000"/><path d="M39.500 15.500h51l5-15.500" fill="#fff" stroke="#000" stroke-width="1"/><path d="M36 15.500l6.500-15.500h53.500l-5 15.500z" fill="#fff"/><path d="M37.500 15.500l6-14" stroke="#000"/><path d="M37 15.500h54l5-15" fill="none" stroke="#000"/></svg>
<div class="a" style="left:110px;top:556px;font-size:12px;line-height:14px;color:#fff;white-space:nowrap">模型</div>
<div class="a mono" style="left:146px;top:556px">Layout1</div>
<div class="a grip" style="left:10px;top:586px;height:12px"></div><div class="a grip" style="left:13px;top:586px;height:12px"></div>
<div class="a" style="left:17px;top:587px;width:600px;height:14px;background:#fff;border:1px solid #8a8d96;border-bottom:none"></div>
<div class="a" style="left:20px;top:590px;height:16px;line-height:16px;white-space:nowrap;font-family:'Liberation Mono','Noto Sans CJK SC',monospace;font-size:13.100px;color:#000">C:\Users\ADMINI~1\AppData\Local\Temp\<span style="font-size:15px;letter-spacing:.2px">自贡燃气管网所管网图</span></div>
<div class="a" style="left:617px;top:580px;width:61px;height:16px;background:#f2f3f6;border-top:1px solid #b9bcc4"></div>
<div class="a" style="left:640px;top:584px;font-size:11px;color:#222">1</div>
<div class="a" style="left:661px;top:581px;width:17px;height:15px;background:#ebedf2;border:1px solid #a9acb4"></div>
<div class="a" style="left:666px;top:586px;width:0;height:0;border-left:4px solid transparent;border-right:4px solid transparent;border-bottom:5px solid #222"></div>
<svg class="a" style="left:614px;top:578px" width="20" height="18"><path d="M2 4c6 2 9 7 9 14" fill="none" stroke="#555" stroke-width="1.200"/></svg>
<svg class="a" style="left:28px;top:460px" width="100" height="96" viewBox="28 460 100 96" fill="none" stroke="#fff" stroke-width="1.100"><path d="M40.500 471.500l3.800 5 3.800-5M44.300 476.500v5.500"/><path d="M41.800 489.500l-4 8.500h8zM41.800 493l-1.800 3.500h3.600z"/><path d="M41.800 498v39.500"/><rect x="37.300" y="537.500" width="9.500" height="9"/><path d="M41.800 537.500v4.200h5"/><path d="M46.800 541.700h38.500"/><path d="M85.300 537.300v8.800l9.500-4.400zM87.500 540v3.400l4-1.700z"/><path d="M104.500 537.300l7.500 9.200M112 537.300l-7.500 9.200"/></svg>
<div class="a" style="left:437px;top:554px;width:180px;height:60px;background:#ffffe1;border:1px solid #3a3a3a;border-radius:9px"></div>
<svg class="a" style="left:445px;top:563px" width="16" height="16"><defs><radialGradient id="gi" cx=".4" cy=".3" r=".8"><stop offset="0" stop-color="#7aa8f0"/><stop offset="1" stop-color="#1a3aa8"/></radialGradient></defs><circle cx="8" cy="8" r="7.300" fill="url(#gi)" stroke="#1a2a78" stroke-width=".8"/><rect x="7" y="6.500" width="2.200" height="6" fill="#fff"/><circle cx="8.100" cy="4.200" r="1.300" fill="#fff"/></svg>
<div class="a" style="left:471px;top:561px;font-family:Noto Serif CJK SC,serif;font-size:12.500px;font-weight:900;line-height:16px;white-space:nowrap;color:#000">通讯中心</div>
<div class="a" style="left:451.500px;top:582.500px;font-size:12px;line-height:16px;letter-spacing:0;white-space:nowrap;color:#000">使软件保持最新的简单方法。</div>
<div class="a" style="left:499px;top:507px;width:165px;height:69px;background:#fff;border-radius:21px 16px 14px 18px"></div>
<svg class="a" style="left:499px;top:506px" width="70" height="70" viewBox="499 506 70 70" fill="none"><path d="M537.200 562.800A23.400 23.400 0 1 1 553.700 546.200" stroke="#3b7df2" stroke-width="7.400" stroke-linecap="round"/><circle cx="531" cy="540.300" r="10.500" stroke="#f8a932" stroke-width="5.400"/><path d="M538.500 548l9.700 8.600" stroke="#f8a932" stroke-width="6" stroke-linecap="round"/></svg>
<div class="a" style="left:561px;top:510px;font-family:'Noto Serif CJK SC',serif;font-weight:700;font-size:35.500px;line-height:50px;white-space:nowrap;color:#111;transform:scaleY(1.260);transform-origin:0 55%">查询啦</div>
<div class="a" style="left:563.500px;top:556px;font-size:14.600px;line-height:18px;white-space:nowrap;color:#111;-webkit-text-stroke:.25px #111">chaxunla.com</div>
</body></html>
